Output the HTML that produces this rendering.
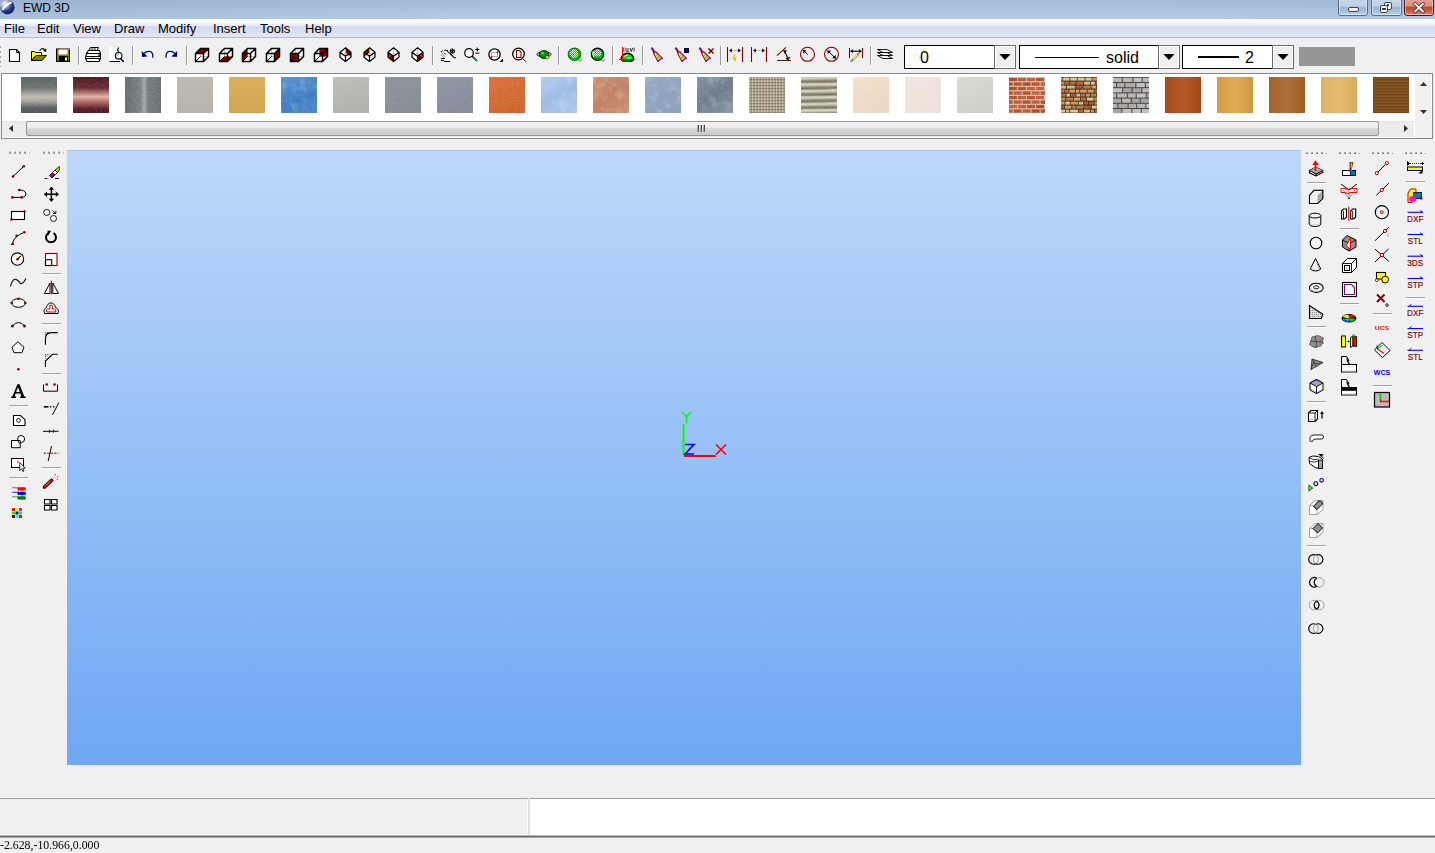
<!DOCTYPE html><html><head><meta charset="utf-8"><style>
*{margin:0;padding:0;box-sizing:border-box}
html,body{width:1435px;height:853px;overflow:hidden;background:#f0f0f0;font-family:"Liberation Sans",sans-serif}
.a{position:absolute}
svg{position:absolute;overflow:visible}
</style></head><body><div class="a" style="left:0;top:0;width:1435px;height:19px;background:linear-gradient(180deg,#a3bbd8 0%,#b6cde8 100%)"></div>
<div class="a" style="left:0;top:0;width:1435px;height:19px;background:linear-gradient(90deg,rgba(20,40,80,0.07) 0%,rgba(20,40,80,0) 35%,rgba(20,40,80,0) 80%,rgba(20,40,80,0.03) 100%)"></div>
<svg style="left:0;top:0" width="16" height="16" viewBox="0 0 16 16">
<defs><radialGradient id="gi" cx="0.3" cy="0.25" r="0.85"><stop offset="0" stop-color="#f4f4f8"/><stop offset="0.35" stop-color="#a8b0d0"/><stop offset="0.6" stop-color="#2a3a88"/><stop offset="1" stop-color="#0c1860"/></radialGradient></defs>
<circle cx="7.4" cy="7.2" r="7.2" fill="url(#gi)"/>
<path d="M1.5 9.5 Q5 4 11 1.5 L12.2 2.6 Q6.5 6 3 10.8Z" fill="#fff"/>
<path d="M3 10.5 Q7 6.5 12.5 3.5" stroke="#5a68a8" stroke-width="0.8" fill="none"/>
</svg>
<div class="a" style="left:23px;top:1px;font-size:12px;line-height:15px;color:#000">EWD 3D</div>
<div class="a" style="left:1338px;top:-2px;width:30px;height:18px;border:1px solid #5a6a82;border-radius:3px;background:linear-gradient(180deg,#c8d8ec 0%,#bccfe6 45%,#9fb6d2 50%,#a6bedb 75%,#c0d4ec 100%);box-shadow:inset 0 0 0 1px rgba(255,255,255,0.45)"></div>
<div class="a" style="left:1371px;top:-2px;width:31px;height:18px;border:1px solid #5a6a82;border-radius:3px;background:linear-gradient(180deg,#c8d8ec 0%,#bccfe6 45%,#9fb6d2 50%,#a6bedb 75%,#c0d4ec 100%);box-shadow:inset 0 0 0 1px rgba(255,255,255,0.45)"></div>
<div class="a" style="left:1404px;top:-2px;width:30px;height:18px;border:1px solid #4a1a20;border-radius:3px;background:linear-gradient(180deg,#e8a293 0%,#dc8a78 45%,#c0432a 50%,#c85a40 75%,#dc8e78 100%);box-shadow:inset 0 0 0 1px rgba(255,255,255,0.45)"></div>
<div class="a" style="left:1348px;top:7px;width:11px;height:5px;background:#f4f2ee;border:1px solid #3a4452;border-radius:2px"></div>
<div class="a" style="left:1384px;top:2px;width:8px;height:8px;background:#f4f2ee;border:1px solid #3a4452;border-radius:2px"></div>
<div class="a" style="left:1387px;top:4px;width:2px;height:2px;background:#3a4452"></div>
<div class="a" style="left:1380px;top:5px;width:8px;height:8px;background:#f4f2ee;border:1px solid #3a4452;border-radius:2px"></div>
<div class="a" style="left:1382px;top:8px;width:4px;height:2px;background:#3a4452"></div>
<svg style="left:1413px;top:2px" width="12" height="11" viewBox="0 0 12 11"><path d="M2 1.8 L10 9.5 M10 1.8 L2 9.5" stroke="#3a3030" stroke-width="3.6" stroke-linecap="round"/><path d="M2 1.8 L10 9.5 M10 1.8 L2 9.5" stroke="#f2f0ee" stroke-width="2" stroke-linecap="round"/></svg>
<div class="a" style="left:0;top:19px;width:1435px;height:19px;background:linear-gradient(180deg,#ffffff 0px,#fcfdfe 2px,#eef1f8 5px,#e6eaf5 6.5px,#d5dbee 7.2px,#d9dff1 12px,#e2e6f5 18px);border-bottom:1px solid #b4b9cc"></div>
<div class="a" style="left:4px;top:21px;font-size:13px;line-height:15px;color:#000">File</div>
<div class="a" style="left:37px;top:21px;font-size:13px;line-height:15px;color:#000">Edit</div>
<div class="a" style="left:73px;top:21px;font-size:13px;line-height:15px;color:#000">View</div>
<div class="a" style="left:114px;top:21px;font-size:13px;line-height:15px;color:#000">Draw</div>
<div class="a" style="left:158px;top:21px;font-size:13px;line-height:15px;color:#000">Modify</div>
<div class="a" style="left:213px;top:21px;font-size:13px;line-height:15px;color:#000">Insert</div>
<div class="a" style="left:260px;top:21px;font-size:13px;line-height:15px;color:#000">Tools</div>
<div class="a" style="left:305px;top:21px;font-size:13px;line-height:15px;color:#000">Help</div>
<div class="a" style="left:0px;top:46px;width:1px;height:2px;background:#a4a4a4"></div>
<div class="a" style="left:0px;top:51px;width:1px;height:2px;background:#a4a4a4"></div>
<div class="a" style="left:0px;top:56px;width:1px;height:2px;background:#a4a4a4"></div>
<div class="a" style="left:0px;top:61px;width:1px;height:2px;background:#a4a4a4"></div>
<div class="a" style="left:0px;top:66px;width:1px;height:1px;background:#a4a4a4"></div>
<div class="a" style="left:78px;top:46px;width:1px;height:19px;background:#9a9a9a"></div>
<div class="a" style="left:79px;top:46px;width:1px;height:19px;background:#fcfcfc"></div>
<div class="a" style="left:132px;top:46px;width:1px;height:19px;background:#9a9a9a"></div>
<div class="a" style="left:133px;top:46px;width:1px;height:19px;background:#fcfcfc"></div>
<div class="a" style="left:186px;top:46px;width:1px;height:19px;background:#9a9a9a"></div>
<div class="a" style="left:187px;top:46px;width:1px;height:19px;background:#fcfcfc"></div>
<div class="a" style="left:432px;top:46px;width:1px;height:19px;background:#9a9a9a"></div>
<div class="a" style="left:433px;top:46px;width:1px;height:19px;background:#fcfcfc"></div>
<div class="a" style="left:558px;top:46px;width:1px;height:19px;background:#9a9a9a"></div>
<div class="a" style="left:559px;top:46px;width:1px;height:19px;background:#fcfcfc"></div>
<div class="a" style="left:612px;top:46px;width:1px;height:19px;background:#9a9a9a"></div>
<div class="a" style="left:613px;top:46px;width:1px;height:19px;background:#fcfcfc"></div>
<div class="a" style="left:642px;top:46px;width:1px;height:19px;background:#9a9a9a"></div>
<div class="a" style="left:643px;top:46px;width:1px;height:19px;background:#fcfcfc"></div>
<div class="a" style="left:720px;top:46px;width:1px;height:19px;background:#9a9a9a"></div>
<div class="a" style="left:721px;top:46px;width:1px;height:19px;background:#fcfcfc"></div>
<div class="a" style="left:870px;top:46px;width:1px;height:19px;background:#9a9a9a"></div>
<div class="a" style="left:871px;top:46px;width:1px;height:19px;background:#fcfcfc"></div>
<div class="a" style="left:904px;top:45px;width:91px;height:24px;background:#fff;border:1px solid #000"></div>
<div class="a" style="left:994px;top:45px;width:22px;height:24px;background:#efefef;border:1px solid #6a6a6a;box-shadow:inset 1px 1px 0 #fff,inset -1px -1px 0 #fff"></div>
<svg style="left:999.0px;top:54px" width="12" height="7" viewBox="0 0 12 7"><path d="M0.3 0 L11.7 0 L6 6Z" fill="#000"/></svg>
<div class="a" style="left:1019px;top:45px;width:140px;height:24px;background:#fff;border:1px solid #000"></div>
<div class="a" style="left:1158px;top:45px;width:22px;height:24px;background:#efefef;border:1px solid #6a6a6a;box-shadow:inset 1px 1px 0 #fff,inset -1px -1px 0 #fff"></div>
<svg style="left:1163.0px;top:54px" width="12" height="7" viewBox="0 0 12 7"><path d="M0.3 0 L11.7 0 L6 6Z" fill="#000"/></svg>
<div class="a" style="left:1182px;top:45px;width:91px;height:24px;background:#fff;border:1px solid #000"></div>
<div class="a" style="left:1272px;top:45px;width:22px;height:24px;background:#efefef;border:1px solid #6a6a6a;box-shadow:inset 1px 1px 0 #fff,inset -1px -1px 0 #fff"></div>
<svg style="left:1277.0px;top:54px" width="12" height="7" viewBox="0 0 12 7"><path d="M0.3 0 L11.7 0 L6 6Z" fill="#000"/></svg>
<div class="a" style="left:920px;top:48px;font-size:16px;line-height:20px;color:#000">0</div>
<div class="a" style="left:1035px;top:57px;width:64px;height:1px;background:#000"></div>
<div class="a" style="left:1106px;top:48px;font-size:16px;line-height:20px;color:#000">solid</div>
<div class="a" style="left:1198px;top:56px;width:41px;height:2px;background:#000"></div>
<div class="a" style="left:1245px;top:48px;font-size:16px;line-height:20px;color:#000">2</div>
<div class="a" style="left:1299px;top:47px;width:56px;height:19px;background:#969696"></div>
<div class="a" style="left:1px;top:73px;width:1432px;height:66px;background:#fff;border:1px solid #828790"></div>
<div class="a" style="left:21px;top:77px;width:36px;height:36px;background:linear-gradient(180deg,#5c6466 0%,#6e7472 30%,#c4beb4 55%,#a8a49c 68%,#5a6062 85%,#4e5658 100%)"></div>
<div class="a" style="left:73px;top:77px;width:36px;height:36px;background:linear-gradient(180deg,#4a1c22 0%,#6a2a30 30%,#e4b4a4 55%,#b06460 70%,#5a2028 88%,#4a1a20 100%)"></div>
<div class="a" style="left:125px;top:77px;width:36px;height:36px;background:linear-gradient(90deg,#646c6e 0%,#7a8284 42%,#a2aaac 54%,#747c7e 64%,#687072 100%)"></div>
<div class="a" style="left:177px;top:77px;width:36px;height:36px;background:linear-gradient(180deg,#bfbab2,#b8b3ab)"></div>
<div class="a" style="left:229px;top:77px;width:36px;height:36px;background:linear-gradient(180deg,#dcae58,#d4a44c)"></div>
<div class="a" style="left:281px;top:77px;width:36px;height:36px;background:linear-gradient(160deg,#5a94d4,#3e7cc2 60%,#4c86cc)"></div>
<div class="a" style="left:333px;top:77px;width:36px;height:36px;background:linear-gradient(160deg,#c0c0bc,#aeb0ac)"></div>
<div class="a" style="left:385px;top:77px;width:36px;height:36px;background:linear-gradient(160deg,#8e949a,#868c94)"></div>
<div class="a" style="left:437px;top:77px;width:36px;height:36px;background:linear-gradient(160deg,#9094a4,#868a9a)"></div>
<div class="a" style="left:489px;top:77px;width:36px;height:36px;background:linear-gradient(160deg,#dc7038,#d06028)"></div>
<div class="a" style="left:541px;top:77px;width:36px;height:36px;background:linear-gradient(150deg,#b4cdf0,#9ebce6 50%,#b0caee)"></div>
<div class="a" style="left:593px;top:77px;width:36px;height:36px;background:linear-gradient(150deg,#cc9074,#c08064 50%,#cc9070)"></div>
<div class="a" style="left:645px;top:77px;width:36px;height:36px;background:linear-gradient(150deg,#94a8c4,#8aa0be)"></div>
<div class="a" style="left:697px;top:77px;width:36px;height:36px;background:linear-gradient(150deg,#8494a4,#6c7c8c 50%,#8898a6)"></div>
<div class="a" style="left:749px;top:77px;width:36px;height:36px;background:repeating-linear-gradient(90deg,rgba(255,255,240,0.25) 0px,rgba(255,255,240,0.25) 1px,rgba(0,0,0,0.15) 2px,rgba(0,0,0,0) 3px),repeating-linear-gradient(180deg,#a89c84 0px,#b8ae98 1.5px,#6e6450 3px)"></div>
<div class="a" style="left:801px;top:77px;width:36px;height:36px;background:repeating-linear-gradient(179deg,#c4c0b0 0px,#dcd8c8 1.5px,#9a9482 3.5px,#74705e 5px,#b0ac9c 6.5px)"></div>
<div class="a" style="left:853px;top:77px;width:36px;height:36px;background:linear-gradient(150deg,#f4e2d0,#ecd6c0)"></div>
<div class="a" style="left:905px;top:77px;width:36px;height:36px;background:linear-gradient(150deg,#f2e6e0,#eee0d8)"></div>
<div class="a" style="left:957px;top:77px;width:36px;height:36px;background:linear-gradient(150deg,#dcdcd2,#cfcec4)"></div>
<div class="a" style="left:1009px;top:77px;width:36px;height:36px;background:repeating-linear-gradient(180deg,#b65a3a 0px,#b65a3a 3.5px,#e8d8c0 4px,#e8d8c0 4.5px)"></div>
<div class="a" style="left:1061px;top:77px;width:36px;height:36px;background:repeating-linear-gradient(180deg,#b88450 0px,#d4b078 2px,#603820 3px,#c89868 4px)"></div>
<div class="a" style="left:1113px;top:77px;width:36px;height:36px;background:repeating-linear-gradient(180deg,#b8b8b8 0px,#b0acac 4px,#404040 5px,#b8b8b8 6px)"></div>
<div class="a" style="left:1165px;top:77px;width:36px;height:36px;background:linear-gradient(90deg,#a44a18,#b65a28 50%,#a24818)"></div>
<div class="a" style="left:1217px;top:77px;width:36px;height:36px;background:linear-gradient(90deg,#d49a44,#e0ac58 50%,#d09840)"></div>
<div class="a" style="left:1269px;top:77px;width:36px;height:36px;background:linear-gradient(90deg,#a46226,#b07038 50%,#a05e24)"></div>
<div class="a" style="left:1321px;top:77px;width:36px;height:36px;background:linear-gradient(90deg,#dcb060,#e4bc70 50%,#d8ac5c)"></div>
<div class="a" style="left:1373px;top:77px;width:36px;height:36px;background:repeating-linear-gradient(180deg,#7a4a1a 0px,#8a5a28 2px,#5a3410 3px)"></div>
<svg style="left:0;top:0" width="1435" height="140" viewBox="0 0 1435 140"><defs><filter id="nz" x="0" y="0" width="100%" height="100%"><feTurbulence type="fractalNoise" baseFrequency="0.9" numOctaves="2" seed="3"/><feColorMatrix type="matrix" values="0 0 0 0 0.5  0 0 0 0 0.5  0 0 0 0 0.5  0 0 0 2.2 -1.1"/></filter><filter id="nz2" x="0" y="0" width="100%" height="100%"><feTurbulence type="fractalNoise" baseFrequency="0.12" numOctaves="3" seed="9"/><feColorMatrix type="matrix" values="0 0 0 0 1  0 0 0 0 1  0 0 0 0 1  0 0 0 1.6 -0.75"/></filter></defs><rect x="21" y="77" width="36" height="36" filter="url(#nz)" opacity="0.35"/><rect x="73" y="77" width="36" height="36" filter="url(#nz)" opacity="0.35"/><rect x="125" y="77" width="36" height="36" filter="url(#nz)" opacity="0.6"/><rect x="177" y="77" width="36" height="36" filter="url(#nz)" opacity="0.3"/><rect x="229" y="77" width="36" height="36" filter="url(#nz)" opacity="0.3"/><rect x="281" y="77" width="36" height="36" filter="url(#nz)" opacity="0.3"/><rect x="333" y="77" width="36" height="36" filter="url(#nz)" opacity="0.6"/><rect x="385" y="77" width="36" height="36" filter="url(#nz)" opacity="0.45"/><rect x="437" y="77" width="36" height="36" filter="url(#nz)" opacity="0.45"/><rect x="489" y="77" width="36" height="36" filter="url(#nz)" opacity="0.55"/><rect x="541" y="77" width="36" height="36" filter="url(#nz)" opacity="0.3"/><rect x="593" y="77" width="36" height="36" filter="url(#nz)" opacity="0.3"/><rect x="645" y="77" width="36" height="36" filter="url(#nz)" opacity="0.3"/><rect x="697" y="77" width="36" height="36" filter="url(#nz)" opacity="0.3"/><rect x="853" y="77" width="36" height="36" filter="url(#nz)" opacity="0.3"/><rect x="957" y="77" width="36" height="36" filter="url(#nz)" opacity="0.3"/><rect x="281" y="77" width="36" height="36" filter="url(#nz2)" opacity="0.35"/><rect x="541" y="77" width="36" height="36" filter="url(#nz2)" opacity="0.35"/><rect x="593" y="77" width="36" height="36" filter="url(#nz2)" opacity="0.35"/><rect x="645" y="77" width="36" height="36" filter="url(#nz2)" opacity="0.35"/><rect x="697" y="77" width="36" height="36" filter="url(#nz2)" opacity="0.35"/><rect x="1009" y="77" width="36" height="36" fill="#e4d6c0"/><rect x="1009.0" y="77.8" width="8.2" height="3.5" fill="#a84a2c"/><rect x="1018.0" y="77.8" width="8.2" height="3.5" fill="#be5c38"/><rect x="1027.0" y="77.8" width="8.2" height="3.5" fill="#c06040"/><rect x="1036.0" y="77.8" width="8.2" height="3.5" fill="#b4522f"/><rect x="1009.0" y="82.3" width="3.7" height="3.5" fill="#b4522f"/><rect x="1013.5" y="82.3" width="8.2" height="3.5" fill="#b4522f"/><rect x="1022.5" y="82.3" width="8.2" height="3.5" fill="#a84a2c"/><rect x="1031.5" y="82.3" width="8.2" height="3.5" fill="#b4522f"/><rect x="1040.5" y="82.3" width="4.5" height="3.5" fill="#be5c38"/><rect x="1009.0" y="86.8" width="8.2" height="3.5" fill="#b4522f"/><rect x="1018.0" y="86.8" width="8.2" height="3.5" fill="#b4522f"/><rect x="1027.0" y="86.8" width="8.2" height="3.5" fill="#c06040"/><rect x="1036.0" y="86.8" width="8.2" height="3.5" fill="#c06040"/><rect x="1009.0" y="91.3" width="3.7" height="3.5" fill="#b4522f"/><rect x="1013.5" y="91.3" width="8.2" height="3.5" fill="#be5c38"/><rect x="1022.5" y="91.3" width="8.2" height="3.5" fill="#b4522f"/><rect x="1031.5" y="91.3" width="8.2" height="3.5" fill="#c06040"/><rect x="1040.5" y="91.3" width="4.5" height="3.5" fill="#b4522f"/><rect x="1009.0" y="95.8" width="8.2" height="3.5" fill="#b4522f"/><rect x="1018.0" y="95.8" width="8.2" height="3.5" fill="#be5c38"/><rect x="1027.0" y="95.8" width="8.2" height="3.5" fill="#b4522f"/><rect x="1036.0" y="95.8" width="8.2" height="3.5" fill="#c06040"/><rect x="1009.0" y="100.3" width="3.7" height="3.5" fill="#b4522f"/><rect x="1013.5" y="100.3" width="8.2" height="3.5" fill="#be5c38"/><rect x="1022.5" y="100.3" width="8.2" height="3.5" fill="#b4522f"/><rect x="1031.5" y="100.3" width="8.2" height="3.5" fill="#be5c38"/><rect x="1040.5" y="100.3" width="4.5" height="3.5" fill="#a84a2c"/><rect x="1009.0" y="104.8" width="8.2" height="3.5" fill="#c06040"/><rect x="1018.0" y="104.8" width="8.2" height="3.5" fill="#be5c38"/><rect x="1027.0" y="104.8" width="8.2" height="3.5" fill="#b4522f"/><rect x="1036.0" y="104.8" width="8.2" height="3.5" fill="#a84a2c"/><rect x="1009.0" y="109.3" width="3.7" height="3.5" fill="#be5c38"/><rect x="1013.5" y="109.3" width="8.2" height="3.5" fill="#b4522f"/><rect x="1022.5" y="109.3" width="8.2" height="3.5" fill="#be5c38"/><rect x="1031.5" y="109.3" width="8.2" height="3.5" fill="#a84a2c"/><rect x="1040.5" y="109.3" width="4.5" height="3.5" fill="#b4522f"/><rect x="1061" y="77" width="36" height="36" fill="#3a2818"/><rect x="1061.0" y="77.6" width="1.3" height="3" fill="#d8b880"/><rect x="1063.1" y="77.6" width="6.3" height="3" fill="#e0c898"/><rect x="1070.2" y="77.6" width="6.6" height="3" fill="#e0c898"/><rect x="1077.6" y="77.6" width="7.1" height="3" fill="#e0c898"/><rect x="1085.5" y="77.6" width="6.1" height="3" fill="#e0c898"/><rect x="1092.4" y="77.6" width="4.6" height="3" fill="#c89058"/><rect x="1061.0" y="81.6" width="3.5" height="3" fill="#c89058"/><rect x="1065.3" y="81.6" width="3.6" height="3" fill="#b86838"/><rect x="1069.7" y="81.6" width="5.8" height="3" fill="#b86838"/><rect x="1076.4" y="81.6" width="6.8" height="3" fill="#b86838"/><rect x="1084.0" y="81.6" width="6.2" height="3" fill="#d8b880"/><rect x="1091.0" y="81.6" width="3.8" height="3" fill="#e0c898"/><rect x="1095.6" y="81.6" width="1.4" height="3" fill="#b86838"/><rect x="1061.0" y="85.6" width="5.0" height="3" fill="#d8b880"/><rect x="1066.8" y="85.6" width="8.0" height="3" fill="#d8b880"/><rect x="1075.6" y="85.6" width="7.0" height="3" fill="#a05830"/><rect x="1083.5" y="85.6" width="7.1" height="3" fill="#c07848"/><rect x="1091.4" y="85.6" width="4.8" height="3" fill="#d0a060"/><rect x="1097.0" y="85.6" width="0.0" height="3" fill="#e0c898"/><rect x="1061.0" y="89.6" width="3.2" height="3" fill="#c07848"/><rect x="1065.0" y="89.6" width="3.7" height="3" fill="#b86838"/><rect x="1069.4" y="89.6" width="5.6" height="3" fill="#d0a060"/><rect x="1075.8" y="89.6" width="3.5" height="3" fill="#d0a060"/><rect x="1080.1" y="89.6" width="6.7" height="3" fill="#d0a060"/><rect x="1087.6" y="89.6" width="6.1" height="3" fill="#d0a060"/><rect x="1094.5" y="89.6" width="2.5" height="3" fill="#b86838"/><rect x="1061.0" y="93.6" width="4.8" height="3" fill="#b86838"/><rect x="1066.6" y="93.6" width="3.3" height="3" fill="#e0c898"/><rect x="1070.7" y="93.6" width="5.0" height="3" fill="#a05830"/><rect x="1076.5" y="93.6" width="3.8" height="3" fill="#d8b880"/><rect x="1081.0" y="93.6" width="4.3" height="3" fill="#b86838"/><rect x="1086.1" y="93.6" width="3.8" height="3" fill="#c89058"/><rect x="1090.8" y="93.6" width="5.2" height="3" fill="#c07848"/><rect x="1096.8" y="93.6" width="0.2" height="3" fill="#c89058"/><rect x="1061.0" y="97.6" width="4.2" height="3" fill="#c89058"/><rect x="1066.0" y="97.6" width="7.3" height="3" fill="#c07848"/><rect x="1074.0" y="97.6" width="6.0" height="3" fill="#d0a060"/><rect x="1080.8" y="97.6" width="5.3" height="3" fill="#b86838"/><rect x="1086.9" y="97.6" width="6.6" height="3" fill="#e0c898"/><rect x="1094.3" y="97.6" width="2.7" height="3" fill="#c89058"/><rect x="1061.0" y="101.6" width="3.6" height="3" fill="#d0a060"/><rect x="1065.4" y="101.6" width="4.4" height="3" fill="#e0c898"/><rect x="1070.6" y="101.6" width="7.4" height="3" fill="#c89058"/><rect x="1078.7" y="101.6" width="4.5" height="3" fill="#d8b880"/><rect x="1084.1" y="101.6" width="3.9" height="3" fill="#a05830"/><rect x="1088.8" y="101.6" width="5.0" height="3" fill="#a05830"/><rect x="1094.6" y="101.6" width="2.4" height="3" fill="#c89058"/><rect x="1061.0" y="105.6" width="3.0" height="3" fill="#a05830"/><rect x="1064.8" y="105.6" width="6.5" height="3" fill="#d0a060"/><rect x="1072.1" y="105.6" width="3.5" height="3" fill="#c07848"/><rect x="1076.4" y="105.6" width="7.1" height="3" fill="#c07848"/><rect x="1084.3" y="105.6" width="6.6" height="3" fill="#a05830"/><rect x="1091.7" y="105.6" width="5.2" height="3" fill="#e0c898"/><rect x="1061.0" y="109.6" width="4.0" height="3" fill="#e0c898"/><rect x="1065.8" y="109.6" width="3.5" height="3" fill="#d8b880"/><rect x="1070.1" y="109.6" width="8.1" height="3" fill="#e0c898"/><rect x="1079.1" y="109.6" width="4.0" height="3" fill="#b86838"/><rect x="1083.9" y="109.6" width="6.2" height="3" fill="#d8b880"/><rect x="1090.9" y="109.6" width="3.2" height="3" fill="#c89058"/><rect x="1094.9" y="109.6" width="2.1" height="3" fill="#b86838"/><rect x="1113" y="77" width="36" height="36" fill="#404040"/><rect x="1113.0" y="77.8" width="8.8" height="4.2" fill="#b8b8b8"/><rect x="1122.8" y="77.8" width="9.6" height="4.2" fill="#bcb8b4"/><rect x="1133.5" y="77.8" width="8.1" height="4.2" fill="#c4c0c0"/><rect x="1142.6" y="77.8" width="6.4" height="4.2" fill="#bcb8b4"/><rect x="1113.0" y="83.0" width="3.1" height="4.2" fill="#b8b8b8"/><rect x="1117.1" y="83.0" width="7.3" height="4.2" fill="#b0aca8"/><rect x="1125.4" y="83.0" width="10.0" height="4.2" fill="#b0aca8"/><rect x="1136.4" y="83.0" width="8.4" height="4.2" fill="#c4c0c0"/><rect x="1145.9" y="83.0" width="3.1" height="4.2" fill="#b8b8b8"/><rect x="1113.0" y="88.2" width="9.2" height="4.2" fill="#c4c0c0"/><rect x="1123.2" y="88.2" width="8.4" height="4.2" fill="#a8a4a4"/><rect x="1132.7" y="88.2" width="8.5" height="4.2" fill="#a8a4a4"/><rect x="1142.2" y="88.2" width="6.8" height="4.2" fill="#bcb8b4"/><rect x="1113.0" y="93.4" width="3.1" height="4.2" fill="#bcb8b4"/><rect x="1117.1" y="93.4" width="9.7" height="4.2" fill="#bcb8b4"/><rect x="1127.8" y="93.4" width="7.9" height="4.2" fill="#b8b8b8"/><rect x="1136.7" y="93.4" width="9.1" height="4.2" fill="#c4c0c0"/><rect x="1146.8" y="93.4" width="2.2" height="4.2" fill="#a8a4a4"/><rect x="1113.0" y="98.6" width="8.1" height="4.2" fill="#a8a4a4"/><rect x="1122.1" y="98.6" width="8.6" height="4.2" fill="#bcb8b4"/><rect x="1131.7" y="98.6" width="8.0" height="4.2" fill="#a8a4a4"/><rect x="1140.7" y="98.6" width="8.3" height="4.2" fill="#a8a4a4"/><rect x="1113.0" y="103.8" width="4.4" height="4.2" fill="#b0aca8"/><rect x="1118.4" y="103.8" width="9.2" height="4.2" fill="#a8a4a4"/><rect x="1128.6" y="103.8" width="7.6" height="4.2" fill="#b0aca8"/><rect x="1137.2" y="103.8" width="8.1" height="4.2" fill="#b8b8b8"/><rect x="1146.3" y="103.8" width="2.7" height="4.2" fill="#c4c0c0"/><rect x="1113.0" y="109.0" width="8.4" height="4.2" fill="#a8a4a4"/><rect x="1122.4" y="109.0" width="9.1" height="4.2" fill="#c4c0c0"/><rect x="1132.5" y="109.0" width="8.3" height="4.2" fill="#c4c0c0"/><rect x="1141.8" y="109.0" width="7.2" height="4.2" fill="#c4c0c0"/><rect x="1009" y="77" width="36" height="36" filter="url(#nz)" opacity="0.4"/><rect x="1061" y="77" width="36" height="36" filter="url(#nz)" opacity="0.4"/><rect x="1113" y="77" width="36" height="36" filter="url(#nz)" opacity="0.4"/><rect x="749" y="77" width="36" height="36" filter="url(#nz)" opacity="0.4"/><rect x="801" y="77" width="36" height="36" filter="url(#nz)" opacity="0.4"/></svg>
<div class="a" style="left:1415px;top:74px;width:16px;height:47px;background:#f0f0f0"></div>
<svg style="left:1420px;top:82px" width="7" height="4" viewBox="0 0 7 4"><path d="M0 4 L3.5 0 L7 4Z" fill="#303030"/></svg>
<svg style="left:1420px;top:110px" width="7" height="4" viewBox="0 0 7 4"><path d="M0 0 L3.5 4 L7 0Z" fill="#303030"/></svg>
<div class="a" style="left:2px;top:121px;width:1412px;height:16px;background:#ececec;border-top:1px solid #e4e4e4"></div>
<div class="a" style="left:1415px;top:121px;width:17px;height:17px;background:#f0f0f0"></div>
<svg style="left:9px;top:125px" width="4" height="7" viewBox="0 0 4 7"><path d="M4 0 L0 3.5 L4 7Z" fill="#303030"/></svg>
<svg style="left:1404px;top:125px" width="4" height="7" viewBox="0 0 4 7"><path d="M0 0 L4 3.5 L0 7Z" fill="#303030"/></svg>
<div class="a" style="left:26px;top:121px;width:1353px;height:15px;border:1px solid #979797;border-radius:2px;background:linear-gradient(180deg,#f3f3f3 0%,#ebebeb 45%,#d9d9d9 50%,#c8c8c8 100%)"></div>
<div class="a" style="left:698px;top:125px;width:1px;height:7px;background:linear-gradient(180deg,#303030,#707070)"></div>
<div class="a" style="left:697px;top:125px;width:1px;height:7px;background:rgba(80,80,80,0.35)"></div>
<div class="a" style="left:701px;top:125px;width:1px;height:7px;background:linear-gradient(180deg,#303030,#707070)"></div>
<div class="a" style="left:700px;top:125px;width:1px;height:7px;background:rgba(80,80,80,0.35)"></div>
<div class="a" style="left:704px;top:125px;width:1px;height:7px;background:linear-gradient(180deg,#303030,#707070)"></div>
<div class="a" style="left:703px;top:125px;width:1px;height:7px;background:rgba(80,80,80,0.35)"></div>
<div class="a" style="left:67px;top:150px;width:1234px;height:615px;background:linear-gradient(180deg,#bdd8f9 0%,#6fa7f4 100%);border-top:1px solid #a6c8f6"></div>
<svg style="left:680px;top:410px" width="50" height="50" viewBox="0 0 50 50">
<path d="M3.5 14 L3.5 45" stroke="#00ff00" stroke-width="2"/>
<path d="M2 2 L6.5 6.5 L11 2 M6.5 6.5 L6.5 13" stroke="#00ff00" stroke-width="1.6" fill="none"/>
<path d="M4 46 L36 46" stroke="#ff0000" stroke-width="2"/>
<path d="M36 34.5 L46 44.5 M46 34.5 L36 44.5" stroke="#ff0000" stroke-width="1.6"/>
<path d="M5 34.5 L14 34.5 L5 44 L14 44" stroke="#0000ff" stroke-width="1.6" fill="none"/>
</svg>
<div class="a" style="left:0px;top:798px;width:1435px;height:1px;background:#a0a0a0"></div>
<div class="a" style="left:0px;top:799px;width:527px;height:35px;background:#f0f0f0"></div>
<div class="a" style="left:0px;top:834px;width:528px;height:1px;background:#fff"></div>
<div class="a" style="left:527px;top:799px;width:1px;height:36px;background:#fff"></div>
<div class="a" style="left:528px;top:798px;width:2px;height:38px;background:#dde2ea"></div>
<div class="a" style="left:530px;top:799px;width:905px;height:37px;background:#fff"></div>
<div class="a" style="left:0px;top:835px;width:1435px;height:1px;background:#b8b8b8"></div>
<div class="a" style="left:0px;top:836px;width:1435px;height:1px;background:#6a6a6a"></div>
<div class="a" style="left:0px;top:837px;width:1435px;height:1px;background:#a8a8a8"></div>
<div class="a" style="left:0px;top:837px;font-family:&quot;Liberation Serif&quot;,serif;font-size:13.5px;line-height:15px;color:#000;transform:scaleX(0.875);transform-origin:0 0">-2.628,-10.966,0.000</div>
<svg style="left:0;top:0" width="1435" height="853" viewBox="0 0 1435 853"><path d="M9.5 49.5 H16.5 L19.5 52.5 V61.5 H9.5Z" fill="#fff" stroke="#000" stroke-width="1.1"/>
<path d="M16.5 49.5 V52.5 H19.5" fill="none" stroke="#000" stroke-width="0.9"/>
<path d="M31.5 51.5 H34.5 L35.5 52.5 H41.5 V55.5 H36 L31.5 60.5Z" fill="#ffff00" stroke="#000" stroke-width="1"/>
<path d="M31.5 60.5 L36 55.5 H46.5 L42 60.5Z" fill="#808000" stroke="#000" stroke-width="1"/>
<path d="M39.6 50.6 Q41.8 47.3 44.6 49.6" fill="none" stroke="#000" stroke-width="1.1"/>
<path d="M43.2 50.6 L46.3 48.6 L46 52.3Z" fill="#000"/>
<rect x="56" y="48.5" width="14" height="13.5" fill="#000"/>
<rect x="57" y="49.5" width="12" height="11.5" fill="#808000"/>
<rect x="58.5" y="49.5" width="9" height="5" fill="#fff"/>
<rect x="59" y="56" width="9" height="6" fill="#000"/>
<rect x="65" y="57.5" width="2" height="3" fill="#fff"/>
<rect x="68.3" y="49" width="1" height="1" fill="#fff"/>
<path d="M88.5 50.5 L90.5 47.5 H98.5 L97 50.5" fill="#fff" stroke="#000" stroke-width="1"/>
<path d="M90.5 49 H96" stroke="#000" stroke-width="0.8"/>
<path d="M86.5 53.5 L88.5 50.5 H99.5 L100.5 53.5 V58.5 L99 61.5 H87 L85.5 58.5Z" fill="#fff" stroke="#000" stroke-width="1.1"/>
<path d="M86 53.5 H100.5 M85.5 56.5 H100.5 M86 58.5 H100" stroke="#000" stroke-width="1.1"/>
<rect x="91.5" y="57" width="3" height="1.2" fill="#e0d000"/>
<path d="M99.5 54 L98.5 55 L99.5 56.5 M99.5 59 L98.5 60" stroke="#000" stroke-width="0.8"/>
<rect x="109" y="47" width="9" height="14.5" fill="#fff"/>
<path d="M109.5 61.5 H120" stroke="#000" stroke-width="1"/>
<path d="M118.7 47.5 L117.5 50 L118.7 52" stroke="#000" stroke-width="1.1" fill="none"/>
<circle cx="118.7" cy="55.8" r="3.3" fill="#fff" stroke="#000" stroke-width="1.1"/>
<path d="M117 56.5 Q117 54.5 119 54" stroke="#00e0ff" stroke-width="1.2" fill="none"/>
<path d="M120.5 58.5 L123.5 61.5" stroke="#000" stroke-width="1.4"/>
<path d="M122 60.5 L123.8 61.8" stroke="#000080" stroke-width="1.3"/>
<path d="M144 53.5 Q146 51 149.5 51.3 Q153.5 52 152.8 57.8" fill="none" stroke="#000080" stroke-width="1.25"/>
<path d="M141.7 51 L142 57 L147.5 56.5Z" fill="#000080"/>
<path d="M174.9 53.5 Q172.9 51 169.4 51.3 Q165.4 52 166.1 57.8" fill="none" stroke="#000080" stroke-width="1.25"/>
<path d="M177.2 51 L176.9 57 L171.4 56.5Z" fill="#000080"/>
<path d="M195.5 53.5 L200.5 48.5 H208.5 V56.5 L203.5 61.5 H195.5Z" fill="#fff"/>
<path d="M200.5 48.5 V56.5 H208.5" fill="none" stroke="#b8b8b8" stroke-width="0.9"/>
<path d="M195.5 53.5 L200.5 48.5 H208.5 L203.5 53.5Z" fill="#800000"/>
<path d="M195.5 61.5 L200.5 56.5" stroke="#000" stroke-width="1"/>
<path d="M195.5 53.5 L200.5 48.5 H208.5 V56.5 L203.5 61.5 H195.5Z M195.5 53.5 H203.5 V61.5 M203.5 53.5 L208.5 48.5" fill="none" stroke="#000" stroke-width="1.5" stroke-linejoin="miter"/>
<path d="M219.5 53.5 L224.5 48.5 H232.5 V56.5 L227.5 61.5 H219.5Z" fill="#fff"/>
<path d="M224.5 48.5 V56.5 H232.5" fill="none" stroke="#b8b8b8" stroke-width="0.9"/>
<path d="M219.5 61.5 L224.5 56.5 H232.5 L227.5 61.5Z" fill="#800000"/>
<path d="M219.5 61.5 L224.5 56.5" stroke="#000" stroke-width="1"/>
<path d="M219.5 53.5 L224.5 48.5 H232.5 V56.5 L227.5 61.5 H219.5Z M219.5 53.5 H227.5 V61.5 M227.5 53.5 L232.5 48.5" fill="none" stroke="#000" stroke-width="1.5" stroke-linejoin="miter"/>
<path d="M242.5 53.5 L247.5 48.5 H255.5 V56.5 L250.5 61.5 H242.5Z" fill="#fff"/>
<path d="M247.5 48.5 V56.5 H255.5" fill="none" stroke="#b8b8b8" stroke-width="0.9"/>
<path d="M242.5 53.5 L247.5 48.5 V56.5 L242.5 61.5Z" fill="#800000"/>
<path d="M242.5 61.5 L247.5 56.5" stroke="#000" stroke-width="1"/>
<path d="M242.5 53.5 L247.5 48.5 H255.5 V56.5 L250.5 61.5 H242.5Z M242.5 53.5 H250.5 V61.5 M250.5 53.5 L255.5 48.5" fill="none" stroke="#000" stroke-width="1.5" stroke-linejoin="miter"/>
<path d="M266.5 53.5 L271.5 48.5 H279.5 V56.5 L274.5 61.5 H266.5Z" fill="#fff"/>
<path d="M271.5 48.5 V56.5 H279.5" fill="none" stroke="#b8b8b8" stroke-width="0.9"/>
<path d="M274.5 53.5 L279.5 48.5 V56.5 L274.5 61.5Z" fill="#800000"/>
<path d="M266.5 61.5 L271.5 56.5" stroke="#000" stroke-width="1"/>
<path d="M266.5 53.5 L271.5 48.5 H279.5 V56.5 L274.5 61.5 H266.5Z M266.5 53.5 H274.5 V61.5 M274.5 53.5 L279.5 48.5" fill="none" stroke="#000" stroke-width="1.5" stroke-linejoin="miter"/>
<path d="M290.5 53.5 L295.5 48.5 H303.5 V56.5 L298.5 61.5 H290.5Z" fill="#fff"/>
<path d="M295.5 48.5 V56.5 H303.5" fill="none" stroke="#b8b8b8" stroke-width="0.9"/>
<path d="M290.5 53.5 H298.5 V61.5 H290.5Z" fill="#800000"/>
<path d="M290.5 61.5 L295.5 56.5" stroke="#000" stroke-width="1"/>
<path d="M290.5 53.5 L295.5 48.5 H303.5 V56.5 L298.5 61.5 H290.5Z M290.5 53.5 H298.5 V61.5 M298.5 53.5 L303.5 48.5" fill="none" stroke="#000" stroke-width="1.5" stroke-linejoin="miter"/>
<path d="M314.5 53.5 L319.5 48.5 H327.5 V56.5 L322.5 61.5 H314.5Z" fill="#fff"/>
<path d="M319.5 48.5 V56.5 H327.5" fill="none" stroke="#b8b8b8" stroke-width="0.9"/>
<path d="M319.5 48.5 H327.5 V56.5 H319.5Z" fill="#800000"/>
<path d="M314.5 61.5 L319.5 56.5" stroke="#000" stroke-width="1"/>
<path d="M314.5 53.5 L319.5 48.5 H327.5 V56.5 L322.5 61.5 H314.5Z M314.5 53.5 H322.5 V61.5 M322.5 53.5 L327.5 48.5" fill="none" stroke="#000" stroke-width="1.5" stroke-linejoin="miter"/>
<path d="M345.5 47.8 L351.0 52.3 L351.0 57.2 L345.5 61.5 L340.0 57.2 L340.0 52.3Z" fill="#fff"/>
<path d="M345.5 47.8 L351.0 52.3 L351.0 57.2 L345.5 52.8Z" fill="#800000"/>
<path d="M345.5 47.8 V56.2 M340.0 57.2 L345.5 52.8 L351.0 57.2" stroke="#b0b0b0" stroke-width="0.8" fill="none"/>
<path d="M345.5 47.8 L351.0 52.3 L351.0 57.2 L345.5 61.5 L340.0 57.2 L340.0 52.3Z M340.0 52.3 L345.5 56.2 L351.0 52.3 M345.5 56.2 V61.5" fill="none" stroke="#000" stroke-width="1.2"/>
<path d="M369.5 47.8 L375.0 52.3 L375.0 57.2 L369.5 61.5 L364.0 57.2 L364.0 52.3Z" fill="#fff"/>
<path d="M369.5 47.8 L364.0 52.3 L364.0 57.2 L369.5 52.8Z" fill="#800000"/>
<path d="M369.5 47.8 V56.2 M364.0 57.2 L369.5 52.8 L375.0 57.2" stroke="#b0b0b0" stroke-width="0.8" fill="none"/>
<path d="M369.5 47.8 L375.0 52.3 L375.0 57.2 L369.5 61.5 L364.0 57.2 L364.0 52.3Z M364.0 52.3 L369.5 56.2 L375.0 52.3 M369.5 56.2 V61.5" fill="none" stroke="#000" stroke-width="1.2"/>
<path d="M393.5 47.8 L399.0 52.3 L399.0 57.2 L393.5 61.5 L388.0 57.2 L388.0 52.3Z" fill="#fff"/>
<path d="M388.0 52.3 L393.5 56.2 L393.5 61.5 L388.0 57.2Z" fill="#800000"/>
<path d="M393.5 47.8 V56.2 M388.0 57.2 L393.5 52.8 L399.0 57.2" stroke="#b0b0b0" stroke-width="0.8" fill="none"/>
<path d="M393.5 47.8 L399.0 52.3 L399.0 57.2 L393.5 61.5 L388.0 57.2 L388.0 52.3Z M388.0 52.3 L393.5 56.2 L399.0 52.3 M393.5 56.2 V61.5" fill="none" stroke="#000" stroke-width="1.2"/>
<path d="M417.5 47.8 L423.0 52.3 L423.0 57.2 L417.5 61.5 L412.0 57.2 L412.0 52.3Z" fill="#fff"/>
<path d="M423.0 52.3 L417.5 56.2 L417.5 61.5 L423.0 57.2Z" fill="#800000"/>
<path d="M417.5 47.8 V56.2 M412.0 57.2 L417.5 52.8 L423.0 57.2" stroke="#b0b0b0" stroke-width="0.8" fill="none"/>
<path d="M417.5 47.8 L423.0 52.3 L423.0 57.2 L417.5 61.5 L412.0 57.2 L412.0 52.3Z M412.0 52.3 L417.5 56.2 L423.0 52.3 M417.5 56.2 V61.5" fill="none" stroke="#000" stroke-width="1.2"/>
<path d="M441.5 50.5 L444.5 50 L448.5 50.3 L456 58 V61.5 H444 L441 59.5 V52Z" fill="#fff"/>
<path d="M442.4 50.5 L441.5 51.5 V52.5" stroke="#000" stroke-width="1" fill="none"/>
<path d="M444.3 50.4 H447.7" stroke="#000" stroke-width="1"/>
<path d="M442.5 51 L445.8 54.2 M442 53.5 L445 56.5 M441.5 55.3 L444.5 58.2 M445 53.5 L446.5 55" stroke="#000" stroke-width="1" stroke-dasharray="1 0.6" fill="none"/>
<path d="M447 50.8 L449 52.5 L451 54.5 L454.2 57.8 H456" stroke="#000" stroke-width="1.1" fill="none"/>
<path d="M441 58.5 H445 M441 60.5 H444 M444 61.5 H450" stroke="#000" stroke-width="1.1"/>
<circle cx="452.3" cy="51" r="2.6" fill="#000"/>
<path d="M451.3 49.8 h0.8 M453.2 49.8 h0.8 M451.3 51.8 h0.8 M453.2 51.8 h0.8" stroke="#fff" stroke-width="0.9"/>
<path d="M448.5 51.5 h0.9 M449.5 52.5 h0.9" stroke="#fff" stroke-width="0.8"/>
<circle cx="469" cy="53" r="4.3" fill="#fff" stroke="#000" stroke-width="1.2"/>
<path d="M472.2 56.2 L477 61" stroke="#000" stroke-width="1.6"/>
<path d="M473.5 57.5 L477 61" stroke="#1a8a8a" stroke-width="1.1"/>
<path d="M477.3 47.5 V51.5 M475.3 49.5 H479.3 M475.3 53.2 H479.3" stroke="#000" stroke-width="1"/>
<circle cx="494.5" cy="54.5" r="5.6" fill="#fff" stroke="#000" stroke-width="1.3"/>
<rect x="491.5" y="52.5" width="6" height="4" fill="none" stroke="#a8a8a8" stroke-width="1"/>
<path d="M497.5 51 L498.5 52.5 L497.5 54 L496.5 52.5Z M491.5 55.5 L492.5 57 L491.5 58.5 L490.5 57Z" fill="#e00000"/>
<path d="M499.5 62 H503 V58.5Z" fill="#000"/>
<circle cx="518.5" cy="54" r="5.8" fill="#fff" stroke="#000" stroke-width="1.3"/>
<path d="M516.5 50.5 H519.5 L521 52 V57.5 H516.5Z" fill="#fff" stroke="#800000" stroke-width="1.1"/>
<path d="M522.5 58.5 L526.5 62" stroke="#303030" stroke-width="1"/>
<ellipse cx="544" cy="54.3" rx="7.2" ry="2.4" fill="none" stroke="#000" stroke-width="0.9"/>
<ellipse cx="543.9" cy="54.5" rx="4.8" ry="4" fill="#009000" stroke="#000" stroke-width="0.8"/>
<circle cx="542.5" cy="53" r="1.5" fill="#40e040"/>
<circle cx="547.3" cy="57.2" r="1.7" fill="#ffff00" stroke="#000" stroke-width="0.6"/>
<defs><pattern id="dith" width="2" height="2" patternUnits="userSpaceOnUse"><rect width="2" height="2" fill="#00e000"/><rect width="1" height="1" fill="#fff"/><rect x="1" y="1" width="1" height="1" fill="#fff"/></pattern></defs>
<path d="M577 59 L580 61 L582 59" stroke="#a0a0a0" stroke-width="1.5" fill="none"/>
<circle cx="574.5" cy="54.3" r="6.2" fill="#00c000" stroke="#008000" stroke-width="1.2"/>
<circle cx="573.8" cy="53.5" r="4.3" fill="url(#dith)"/>
<path d="M600 59 L603 61 L605 59" stroke="#a0a0a0" stroke-width="1.5" fill="none"/>
<circle cx="597.5" cy="54.3" r="6.1" fill="#00c000" stroke="#000" stroke-width="1.3"/>
<circle cx="597.5" cy="53" r="3.6" fill="url(#dith)"/>
<path d="M593.3 51 Q592 54 594 57" stroke="#fff" stroke-width="1.3" fill="none"/>
<path d="M594 58.5 H600" stroke="#009000" stroke-width="1.2"/>
<path d="M620.5 57.5 Q622 53.8 625 53 Q628 51.8 631 53.5 Q634 55 634.2 58.5 Q634.5 61.5 631 61.8 H624 Q620 61.5 620.5 57.5Z" fill="#000"/>
<path d="M621.8 57.5 Q623 55 625.5 54.3 Q628 53.3 630.5 54.8 Q633 56 633 58.5 Q633 60.5 630.5 60.6 H624 Q621.6 60.5 621.8 57.5Z" fill="#00e000"/>
<path d="M624 56.5 Q626 55 628 55.5 M627 58 H631" stroke="#fff" stroke-width="0.9" fill="none"/>
<path d="M622.5 47 V62 M619 59.5 H635" stroke="#ff0000" stroke-width="1"/>
<path d="M624 47.5 Q623.2 49.5 624 51.5 M626 48 V50.5 Q626 51.5 627 51.5 Q628 51.5 628 50.5 V48 M629 51.2 L628.6 52.2 M630 48 L631.3 51.5 L632.6 48 M633.8 47.5 Q634.6 49.5 633.8 51.5" stroke="#000" stroke-width="0.8" fill="none"/>
<path d="M652.0 48.5 L654.0 51.5" stroke="#800080" stroke-width="2.2" stroke-linecap="round"/>
<path d="M653.3 52 L655.5 51.5 L662.5 58.5 L660.5 59 L658.0 61.5 L655.0 56Z" fill="#ffff00" stroke="#800080" stroke-width="1.1" stroke-linejoin="round"/>
<path d="M654.0 52.3 L655.5 52" stroke="#ff0000" stroke-width="1.2"/>
<path d="M656.0 55.5 L657.5 54.5 M657.0 57.5 L659.0 56" stroke="#00e000" stroke-width="1"/>
<path d="M657.5 59 L659.0 58 M659.5 57.5 L661.0 56.5" stroke="#ff00ff" stroke-width="1"/>
<path d="M676.0 48.5 L678.0 51.5" stroke="#800080" stroke-width="2.2" stroke-linecap="round"/>
<path d="M677.3 52 L679.5 51.5 L686.5 58.5 L684.5 59 L682.0 61.5 L679.0 56Z" fill="#ffff00" stroke="#800080" stroke-width="1.1" stroke-linejoin="round"/>
<path d="M678.0 52.3 L679.5 52" stroke="#ff0000" stroke-width="1.2"/>
<path d="M680.0 55.5 L681.5 54.5 M681.0 57.5 L683.0 56" stroke="#00e000" stroke-width="1"/>
<path d="M681.5 59 L683.0 58 M683.5 57.5 L685.0 56.5" stroke="#ff00ff" stroke-width="1"/>
<path d="M700.0 48.5 L702.0 51.5" stroke="#800080" stroke-width="2.2" stroke-linecap="round"/>
<path d="M701.3 52 L703.5 51.5 L710.5 58.5 L708.5 59 L706.0 61.5 L703.0 56Z" fill="#ffff00" stroke="#800080" stroke-width="1.1" stroke-linejoin="round"/>
<path d="M702.0 52.3 L703.5 52" stroke="#ff0000" stroke-width="1.2"/>
<path d="M704.0 55.5 L705.5 54.5 M705.0 57.5 L707.0 56" stroke="#00e000" stroke-width="1"/>
<path d="M705.5 59 L707.0 58 M707.5 57.5 L709.0 56.5" stroke="#ff00ff" stroke-width="1"/>
<rect x="684" y="48" width="5" height="5" fill="#000"/>
<path d="M684.2 52.8 L688 49" stroke="#0000ff" stroke-width="1.3"/><path d="M685.5 49.2 H688.5 V52" fill="#0000ff"/>
<path d="M708.5 48.5 L713.5 53.5 M713.5 48.5 L708.5 53.5" stroke="#800000" stroke-width="1.5"/>
<path d="M727.5 47 V62 M742.5 47 V62" stroke="#800000" stroke-width="1.1"/>
<path d="M731 50.5 H739" stroke="#b0b0b0" stroke-width="0.9"/>
<path d="M729 50.5 L732 48.5 V52.5Z M741 50.5 L738 48.5 V52.5Z" fill="#000"/>
<path d="M735 54.5 L733.5 58 L735.5 57.5 L734.5 61" stroke="#c0b000" stroke-width="1.3" fill="none"/>
<path d="M735.5 55 L734 58 L736 57.5" stroke="#ffff00" stroke-width="0.8" fill="none"/>
<path d="M751.5 47 V62 M766.5 47 V62" stroke="#800000" stroke-width="1.1"/>
<path d="M755 50.5 H763" stroke="#b0b0b0" stroke-width="0.9"/>
<path d="M753 50.5 L756 48.5 V52.5Z M765 50.5 L762 48.5 V52.5Z" fill="#000"/>
<path d="M777 55.7 L786 47.3 M777 60.5 H791" stroke="#800000" stroke-width="1.1"/>
<path d="M784.5 51 L788 58.5" stroke="#000" stroke-width="1.1"/>
<path d="M783 50 L787 50.5 L784.5 53.5Z M785.5 58 L790.5 57 L788 60.5Z" fill="#000"/>
<circle cx="807.5" cy="54.3" r="7" fill="none" stroke="#800000" stroke-width="1.1"/>
<path d="M807.8 54.6 L804.5 51.5" stroke="#000" stroke-width="1"/><path d="M803 50 L806.5 50.5 L803.5 53.5Z" fill="#000"/>
<circle cx="831.5" cy="54.3" r="7" fill="none" stroke="#800000" stroke-width="1.1"/>
<path d="M828.5 51.5 L834.8 57.6" stroke="#000" stroke-width="1"/><path d="M827.3 50.3 L831 50.8 L827.8 54Z M836 58.8 L832.3 58.3 L835.5 55Z" fill="#000"/>
<path d="M849.5 48 V58 M862.5 48 V58" stroke="#800000" stroke-width="1.1"/>
<path d="M851 51.2 H861" stroke="#000" stroke-width="1.1"/><path d="M850 51.2 L853 49.3 V53.1Z M862 51.2 L859 49.3 V53.1Z" fill="#000"/>
<path d="M851.5 61 L857.5 55" stroke="#909090" stroke-width="2.4" stroke-linecap="round"/>
<path d="M853 59 L857 55" stroke="#ffff00" stroke-width="1.1"/>
<path d="M857.5 54.5 L859.5 53" stroke="#909090" stroke-width="2"/>
<path d="M877.5 49.5 H887 L892.5 52.5 H883 Z" fill="#fff" stroke="#000" stroke-width="0.9"/>
<path d="M877.5 52.5 H887 L892.5 55.5 H883 Z" fill="#fff" stroke="#000" stroke-width="0.9"/>
<path d="M877.5 55.5 H887 L892.5 58.5 H883 Z" fill="#fff" stroke="#000" stroke-width="0.9"/>
<rect x="9" y="151.5" width="2" height="2" fill="#b0b0b0"/>
<rect x="10" y="152.5" width="1" height="1" fill="#6a6a6a"/>
<rect x="9" y="152.5" width="1" height="1" fill="#909090"/>
<rect x="14" y="151.5" width="2" height="2" fill="#b0b0b0"/>
<rect x="15" y="152.5" width="1" height="1" fill="#6a6a6a"/>
<rect x="14" y="152.5" width="1" height="1" fill="#909090"/>
<rect x="19" y="151.5" width="2" height="2" fill="#b0b0b0"/>
<rect x="20" y="152.5" width="1" height="1" fill="#6a6a6a"/>
<rect x="19" y="152.5" width="1" height="1" fill="#909090"/>
<rect x="24" y="151.5" width="2" height="2" fill="#b0b0b0"/>
<rect x="25" y="152.5" width="1" height="1" fill="#6a6a6a"/>
<rect x="24" y="152.5" width="1" height="1" fill="#909090"/>
<rect x="29" y="152.5" width="1" height="1" fill="#909090"/>
<rect x="43" y="151.5" width="2" height="2" fill="#b0b0b0"/>
<rect x="44" y="152.5" width="1" height="1" fill="#6a6a6a"/>
<rect x="43" y="152.5" width="1" height="1" fill="#909090"/>
<rect x="48" y="151.5" width="2" height="2" fill="#b0b0b0"/>
<rect x="49" y="152.5" width="1" height="1" fill="#6a6a6a"/>
<rect x="48" y="152.5" width="1" height="1" fill="#909090"/>
<rect x="53" y="151.5" width="2" height="2" fill="#b0b0b0"/>
<rect x="54" y="152.5" width="1" height="1" fill="#6a6a6a"/>
<rect x="53" y="152.5" width="1" height="1" fill="#909090"/>
<rect x="58" y="151.5" width="2" height="2" fill="#b0b0b0"/>
<rect x="59" y="152.5" width="1" height="1" fill="#6a6a6a"/>
<rect x="58" y="152.5" width="1" height="1" fill="#909090"/>
<rect x="63" y="152.5" width="1" height="1" fill="#909090"/>
<path d="M13 176.5 L23.8 166.3" stroke="#000" stroke-width="1"/>
<circle cx="13" cy="176.5" r="1.3" fill="#800000"/>
<circle cx="23.8" cy="166.3" r="1.3" fill="#800000"/>
<path d="M44.5 178.5 H47.5 M55 178.5 H59" stroke="#000" stroke-width="0.9"/>
<path d="M49.5 175.5 L52.5 172.5 L55 175 L52 178Z" fill="#a000a0" stroke="#000" stroke-width="0.8"/>
<path d="M52.5 172.5 L55 170 L57.5 172.5 L55 175Z" fill="#fff" stroke="#000" stroke-width="0.8"/>
<path d="M55 170 L59.3 166.5 V170 L57.5 172.5Z" fill="#e0e000" stroke="#000" stroke-width="0.8"/>
<path d="M12.4 197.4 H21.7 Q26.5 197 25.8 193.3 Q25 190 19.2 190" fill="none" stroke="#000" stroke-width="1"/>
<circle cx="12.4" cy="197.4" r="1.3" fill="#800000"/>
<circle cx="21.7" cy="197.4" r="1.3" fill="#800000"/>
<circle cx="19.2" cy="190" r="1.3" fill="#800000"/>
<path d="M44.5 194.3 H58.3 M51.4 187.3 V201.3" stroke="#000" stroke-width="1.5"/>
<path d="M44 194.3 L47 191.5 V197.1Z M58.8 194.3 L55.8 191.5 V197.1Z M51.4 186.8 L48.6 189.8 H54.2Z M51.4 201.8 L48.6 198.8 H54.2Z" fill="#000"/>
<rect x="11.5" y="211.5" width="13" height="8" fill="#fff" stroke="#000" stroke-width="1.1"/>
<circle cx="24.5" cy="211.5" r="1.3" fill="#800000"/>
<circle cx="11.5" cy="219.5" r="1.3" fill="#800000"/>
<circle cx="46.7" cy="212.4" r="3" fill="#fff" stroke="#000" stroke-width="0.9"/><circle cx="53.5" cy="218.5" r="3" fill="#fff" stroke="#000" stroke-width="0.9"/>
<path d="M52.5 210.5 L55.5 213.3 M55.8 210.8 V213.5 H53" stroke="#000" stroke-width="0.9" fill="none"/>
<path d="M12.6 243.5 Q14 236 24.3 232.3" fill="none" stroke="#000" stroke-width="1"/>
<circle cx="24.3" cy="232.3" r="1.3" fill="#800000"/>
<circle cx="16.6" cy="235.8" r="1.3" fill="#800000"/>
<path d="M10.8 245 L12.6 241.8 L14.6 245Z" fill="#800000"/>
<path d="M48.5 233 A5 5 0 1 0 53.5 233" fill="none" stroke="#000" stroke-width="2"/>
<path d="M47.5 230.5 L51 231 L48.2 235.5Z" fill="#000"/>
<circle cx="17.45" cy="259.05" r="6.2" fill="#fff" stroke="#000" stroke-width="1.1"/>
<path d="M17.4 259.2 L20.8 255.9" stroke="#800000" stroke-width="1.3"/>
<circle cx="17.4" cy="259.2" r="1.2" fill="#800000"/>
<rect x="45.5" y="253.5" width="11.5" height="12" fill="#fff" stroke="#800000" stroke-width="1.1"/>
<rect x="45.5" y="259.7" width="6.2" height="5.8" fill="#fff" stroke="#000" stroke-width="1.1"/>
<rect x="42" y="273" width="19" height="1" fill="#a0a0a0"/>
<rect x="42" y="274" width="19" height="1" fill="#fbfbfb"/>
<path d="M10.5 286.5 Q12 279 15.5 279.2 Q18 279.5 20.5 283.5 Q23 284.5 26 278.5" fill="none" stroke="#000" stroke-width="1.1"/>
<path d="M44.5 293.5 L50 283 V293.5Z M58.5 293.5 L52.8 283 V293.5Z" fill="#fff" stroke="#000" stroke-width="1"/>
<path d="M51.4 280.7 V294.4" stroke="#c00000" stroke-width="1.1"/>
<ellipse cx="18.5" cy="303" rx="6.8" ry="4.3" fill="#fff" stroke="#000" stroke-width="1"/>
<circle cx="18.5" cy="298.7" r="1.3" fill="#800000"/>
<circle cx="11.7" cy="303" r="1.3" fill="#800000"/>
<circle cx="25.3" cy="303" r="1.3" fill="#800000"/>
<path d="M44.5 313.5 Q43 309 46.5 307.5 Q47.5 303 51 303 Q54.5 303 55.5 307.5 Q59.5 309 58 313.5 Z" fill="#fff" stroke="#000" stroke-width="1"/>
<path d="M46.5 312 Q45.5 309.5 47.5 309 H49.8 V305.5 Q51 304.5 52.3 305.5 V309 H54.5 Q56.5 309.5 55.8 312Z" fill="none" stroke="#c00000" stroke-width="1"/>
<path d="M12.4 326 Q18.5 319 24.5 326" fill="none" stroke="#000" stroke-width="1"/>
<circle cx="12.4" cy="326" r="1.5" fill="#800000"/>
<circle cx="24.5" cy="326" r="1.5" fill="#800000"/>
<rect x="42" y="323" width="19" height="1" fill="#a0a0a0"/>
<rect x="42" y="324" width="19" height="1" fill="#fbfbfb"/>
<path d="M45.4 344.8 V339.5 Q45.4 332.6 51.5 332.6 H57.7" fill="none" stroke="#000" stroke-width="1.1"/>
<path d="M45.4 332.5 H49 M45.4 332.5 V337 M46.5 334 L48 333.2" stroke="#000" stroke-width="0.7" stroke-dasharray="0.8 0.8" fill="none"/>
<path d="M17.9 341.8 L24 347.2 L21.9 352.7 H14 L12 347.2Z" fill="#fff" stroke="#000" stroke-width="1"/>
<path d="M45.4 366.9 V361.1 L52.5 354.3 H57.7" fill="none" stroke="#000" stroke-width="1.1"/>
<path d="M45.4 354.5 H50 M45.4 354.5 V359 M46.5 356 L48 355.2" stroke="#000" stroke-width="0.7" stroke-dasharray="0.8 0.8" fill="none"/>
<circle cx="18.4" cy="369.3" r="1.3" fill="#800000"/>
<rect x="42" y="373" width="19" height="1" fill="#a0a0a0"/>
<rect x="42" y="374" width="19" height="1" fill="#fbfbfb"/>
<path fill-rule="evenodd" d="M17.4 384.3 H19.6 L24.3 396.4 H25.7 V397.9 H20.2 V396.4 H21.3 L20.3 393.6 H15.6 L14.7 396.4 H16 V397.9 H11.2 V396.4 H12.4 Z M16.1 392.1 H19.8 L18 387.2 Z" fill="#000"/>
<path d="M43.5 384.5 V391.2 H57.5 V384.5" fill="none" stroke="#000" stroke-width="1"/>
<circle cx="46.7" cy="384.5" r="1.3" fill="#800000"/>
<circle cx="54.6" cy="384.5" r="1.3" fill="#800000"/>
<rect x="9" y="405" width="19" height="1" fill="#a0a0a0"/>
<rect x="9" y="406" width="19" height="1" fill="#fbfbfb"/>
<path d="M43.8 406.8 H48.5" stroke="#000" stroke-width="1.6"/><path d="M50 406.8 H51.5 M53 406.8 H54.5" stroke="#800000" stroke-width="1.6"/>
<path d="M52.5 414.9 L58.8 402.6" stroke="#000" stroke-width="1"/>
<path d="M13.5 415.5 H20.5 L25 419.7 V425.5 H13.5Z" fill="#fff" stroke="#000" stroke-width="1.1"/>
<circle cx="18.5" cy="420.3" r="1.9" fill="none" stroke="#000" stroke-width="0.9"/>
<path d="M43 431.3 H58.5" stroke="#000" stroke-width="1"/><path d="M49.5 429.8 V432.8 M53.4 429.8 V432.8" stroke="#800000" stroke-width="1.2"/>
<circle cx="21.1" cy="439" r="3.5" fill="#fff" stroke="#000" stroke-width="1"/>
<path d="M11.5 440.5 H20.2 V447.7 H11.5Z" fill="#fff" stroke="#000" stroke-width="1"/>
<path d="M17.8 440.5 A3.5 3.5 0 0 0 20.2 443.6" fill="none" stroke="#000" stroke-width="0.9"/>
<path d="M43.7 453.2 H58.5" stroke="#800000" stroke-width="1" stroke-dasharray="2.2 1.3"/><path d="M48.2 461 L51.5 446.1" stroke="#000" stroke-width="1"/>
<rect x="11.5" y="458.5" width="12" height="9" fill="#fff" stroke="#000" stroke-width="1"/>
<path d="M17 460.8 L18.8 462.5 M18.8 460.8 L17 462.5" stroke="#c00000" stroke-width="0.7"/>
<path d="M19.8 462.5 V470.5 L21.5 468.8 L23 471.5 L24 471 L22.8 468.2 H25.3Z" fill="#fff" stroke="#000" stroke-width="0.8"/>
<rect x="9" y="477" width="19" height="1" fill="#a0a0a0"/>
<rect x="9" y="478" width="19" height="1" fill="#fbfbfb"/>
<rect x="42" y="467" width="19" height="1" fill="#a0a0a0"/>
<rect x="42" y="468" width="19" height="1" fill="#fbfbfb"/>
<path d="M12 488.3 L13 487.3 L14 488.3 L15 487.3 L16 488.3 L17 487.3" fill="none" stroke="#ff0000" stroke-width="0.9"/>
<path d="M17 487.8 L18.5 486.7 L19.5 487.7 L21 486.7 L22 487.5 L23.5 487.0 L25.8 487.8 V490.7 L24 490.3 L22 490.9 L20 490.3 L18 490.7 L17.5 489.5Z" fill="#ff0000"/>
<path d="M12 492.8 L13 491.8 L14 492.8 L15 491.8 L16 492.8 L17 491.8" fill="none" stroke="#0000ff" stroke-width="0.9"/>
<path d="M17 492.3 L18.5 491.2 L19.5 492.2 L21 491.2 L22 492 L23.5 491.5 L25.8 492.3 V495.2 L24 494.8 L22 495.4 L20 494.8 L18 495.2 L17.5 494Z" fill="#0000ff"/>
<path d="M12 497.3 L13 496.3 L14 497.3 L15 496.3 L16 497.3 L17 496.3" fill="none" stroke="#008000" stroke-width="0.9"/>
<path d="M17 496.8 L18.5 495.7 L19.5 496.7 L21 495.7 L22 496.5 L23.5 496.0 L25.8 496.8 V499.7 L24 499.3 L22 499.9 L20 499.3 L18 499.7 L17.5 498.5Z" fill="#008000"/>
<path d="M44.5 487 L51.5 480.5" stroke="#000" stroke-width="3.6" stroke-linecap="round"/>
<path d="M44.5 487 L51.5 480.5" stroke="#e00000" stroke-width="2.2" stroke-linecap="round"/>
<path d="M45.5 485.5 L50 481.5" stroke="#ff9090" stroke-width="0.7"/>
<path d="M53.5 478.5 L54.5 477.5 M55 475.5 L55.5 474 M57 477 L58.5 476.5 M56.5 479 L58 480" stroke="#c00000" stroke-width="0.8"/>
<path d="M44.5 499.5 H50 V504 H44.5Z M51.5 499.5 H57 V504 H51.5Z M44.5 505.5 H50 V510 H44.5Z M51.5 505.5 H57 V510 H51.5Z" fill="#fff" stroke="#000" stroke-width="1.1"/>
<rect x="12.0" y="508.0" width="3" height="3" fill="#ff0000"/>
<rect x="15.5" y="508.0" width="3" height="3" fill="#ffff00"/>
<rect x="19.0" y="508.0" width="3" height="3" fill="#ff00ff"/>
<rect x="12.0" y="511.5" width="3" height="3" fill="#00ff00"/>
<rect x="15.5" y="511.5" width="3" height="3" fill="#0000ff"/>
<rect x="19.0" y="511.5" width="3" height="3" fill="#00ff00"/>
<rect x="12.0" y="515.0" width="3" height="3" fill="#800000"/>
<rect x="15.5" y="515.0" width="3" height="3" fill="#00ffff"/>
<rect x="19.0" y="515.0" width="3" height="3" fill="#ff0000"/>
<rect x="1306" y="152" width="2" height="2" fill="#b0b0b0"/>
<rect x="1307" y="153" width="1" height="1" fill="#6a6a6a"/>
<rect x="1306" y="153" width="1" height="1" fill="#909090"/>
<rect x="1311" y="152" width="2" height="2" fill="#b0b0b0"/>
<rect x="1312" y="153" width="1" height="1" fill="#6a6a6a"/>
<rect x="1311" y="153" width="1" height="1" fill="#909090"/>
<rect x="1316" y="152" width="2" height="2" fill="#b0b0b0"/>
<rect x="1317" y="153" width="1" height="1" fill="#6a6a6a"/>
<rect x="1316" y="153" width="1" height="1" fill="#909090"/>
<rect x="1321" y="152" width="2" height="2" fill="#b0b0b0"/>
<rect x="1322" y="153" width="1" height="1" fill="#6a6a6a"/>
<rect x="1321" y="153" width="1" height="1" fill="#909090"/>
<rect x="1326" y="153" width="1" height="1" fill="#909090"/>
<rect x="1339" y="152" width="2" height="2" fill="#b0b0b0"/>
<rect x="1340" y="153" width="1" height="1" fill="#6a6a6a"/>
<rect x="1339" y="153" width="1" height="1" fill="#909090"/>
<rect x="1344" y="152" width="2" height="2" fill="#b0b0b0"/>
<rect x="1345" y="153" width="1" height="1" fill="#6a6a6a"/>
<rect x="1344" y="153" width="1" height="1" fill="#909090"/>
<rect x="1349" y="152" width="2" height="2" fill="#b0b0b0"/>
<rect x="1350" y="153" width="1" height="1" fill="#6a6a6a"/>
<rect x="1349" y="153" width="1" height="1" fill="#909090"/>
<rect x="1354" y="152" width="2" height="2" fill="#b0b0b0"/>
<rect x="1355" y="153" width="1" height="1" fill="#6a6a6a"/>
<rect x="1354" y="153" width="1" height="1" fill="#909090"/>
<rect x="1359" y="153" width="1" height="1" fill="#909090"/>
<rect x="1372" y="152" width="2" height="2" fill="#b0b0b0"/>
<rect x="1373" y="153" width="1" height="1" fill="#6a6a6a"/>
<rect x="1372" y="153" width="1" height="1" fill="#909090"/>
<rect x="1377" y="152" width="2" height="2" fill="#b0b0b0"/>
<rect x="1378" y="153" width="1" height="1" fill="#6a6a6a"/>
<rect x="1377" y="153" width="1" height="1" fill="#909090"/>
<rect x="1382" y="152" width="2" height="2" fill="#b0b0b0"/>
<rect x="1383" y="153" width="1" height="1" fill="#6a6a6a"/>
<rect x="1382" y="153" width="1" height="1" fill="#909090"/>
<rect x="1387" y="152" width="2" height="2" fill="#b0b0b0"/>
<rect x="1388" y="153" width="1" height="1" fill="#6a6a6a"/>
<rect x="1387" y="153" width="1" height="1" fill="#909090"/>
<rect x="1392" y="153" width="1" height="1" fill="#909090"/>
<rect x="1405" y="152" width="2" height="2" fill="#b0b0b0"/>
<rect x="1406" y="153" width="1" height="1" fill="#6a6a6a"/>
<rect x="1405" y="153" width="1" height="1" fill="#909090"/>
<rect x="1410" y="152" width="2" height="2" fill="#b0b0b0"/>
<rect x="1411" y="153" width="1" height="1" fill="#6a6a6a"/>
<rect x="1410" y="153" width="1" height="1" fill="#909090"/>
<rect x="1415" y="152" width="2" height="2" fill="#b0b0b0"/>
<rect x="1416" y="153" width="1" height="1" fill="#6a6a6a"/>
<rect x="1415" y="153" width="1" height="1" fill="#909090"/>
<rect x="1420" y="152" width="2" height="2" fill="#b0b0b0"/>
<rect x="1421" y="153" width="1" height="1" fill="#6a6a6a"/>
<rect x="1420" y="153" width="1" height="1" fill="#909090"/>
<rect x="1425" y="153" width="1" height="1" fill="#909090"/>
<path d="M1309.5 170.5 L1316 167 L1322.8 170.5 V172.5 L1316 176 L1309.5 172.8Z" fill="#fff" stroke="#000" stroke-width="1.1"/>
<path d="M1309.5 170.5 L1316 167 L1322.8 170.5 L1316 174Z" fill="#a8a8a8"/>
<path d="M1309.5 170.5 L1316 174 L1322.8 170.5 M1316 174 V176" fill="none" stroke="#000" stroke-width="1"/>
<path d="M1317.5 174.3 L1321.5 172.5" stroke="#ff0000" stroke-width="1"/>
<path d="M1315.5 171 V163.5" stroke="#ff0000" stroke-width="1.6"/><path d="M1312.3 165 L1315.5 160.3 L1318.7 165Z" fill="#ff0000"/>
<path d="M1316.8 167.5 L1317.8 168.5" stroke="#c0a000" stroke-width="0.8"/>
<rect x="1307" y="182" width="19" height="1" fill="#a0a0a0"/>
<rect x="1307" y="183" width="19" height="1" fill="#fbfbfb"/>
<path d="M1309.5 195.3 L1314 190.3 H1322.8 V198.6 L1317.6 203.5 H1309.5Z" fill="#f0f0f0" stroke="#000" stroke-width="1.2"/>
<path d="M1317.3 195.6 L1321.9 191.6 V198.3 L1317.3 202.6Z" fill="#a8a8a8"/>
<path d="M1310.6 202.5 V195.8 L1314.5 191.4 H1321.5 M1316.7 195.8 V202.5" fill="none" stroke="#fff" stroke-width="0.9"/>
<path d="M1309.2 215.5 V224 A5.8 2.5 0 0 0 1320.8 224 V215.5" fill="#f2f2f2" stroke="#000" stroke-width="1"/>
<ellipse cx="1315" cy="215.6" rx="5.8" ry="2.4" fill="#f2f2f2" stroke="#000" stroke-width="1"/>
<path d="M1310 223 A5 2 0 0 0 1320 223" fill="none" stroke="#c0c0c0" stroke-width="0.7"/>
<circle cx="1316" cy="243" r="5.8" fill="#f2f2f2" stroke="#000" stroke-width="1.1"/>
<path d="M1315.5 258.5 L1310.3 269 Q1315.5 273 1320.8 269Z" fill="#f2f2f2" stroke="#000" stroke-width="1"/>
<path d="M1317 263 L1319 269" stroke="#b0b0b0" stroke-width="1"/>
<ellipse cx="1316.3" cy="287.8" rx="6.9" ry="4.6" fill="#f2f2f2" stroke="#000" stroke-width="1.1"/>
<ellipse cx="1316.3" cy="287.3" rx="2.6" ry="1.5" fill="#f2f2f2" stroke="#000" stroke-width="0.9"/>
<path d="M1310 289.5 Q1316 293.5 1322.5 289.5" fill="none" stroke="#b0b0b0" stroke-width="0.8"/>
<defs><pattern id="dots" width="2" height="2" patternUnits="userSpaceOnUse"><rect width="2" height="2" fill="#e0e0e0"/><rect width="1" height="1" fill="#909090"/></pattern></defs>
<path d="M1309.5 318.5 V305.5 L1322.8 314.3 L1321.3 318.5Z" fill="url(#dots)" stroke="#000" stroke-width="1.1"/>
<rect x="1307" y="326" width="19" height="1" fill="#a0a0a0"/>
<rect x="1307" y="327" width="19" height="1" fill="#fbfbfb"/>
<path d="M1309.5 344.5 L1312 337 L1318 335.5 L1323.5 338 L1321 346 L1314 347.5Z" fill="#909090" stroke="#505050" stroke-width="0.8"/>
<path d="M1310.5 341 L1322.5 342 M1315 336 L1317 347" stroke="#404040" stroke-width="0.8"/>
<circle cx="1321" cy="341" r="0.7" fill="#ff0000"/><circle cx="1316" cy="347" r="0.7" fill="#0000c0"/><circle cx="1323" cy="343" r="0.7" fill="#0000c0"/>
<path d="M1311 369.5 L1312 359 L1323 362.5Z" fill="#909090" stroke="#303030" stroke-width="0.9"/>
<path d="M1312 359 L1316.5 366.5 M1314.5 360 L1311 369.5 M1323 362.5 L1314 364" stroke="#303030" stroke-width="0.8"/>
<path d="M1310 383 L1316.5 379.5 L1323 383 V390 L1316.5 393.5 L1310 390Z" fill="#fff" stroke="#000" stroke-width="1"/>
<path d="M1310 383 L1316.5 379.5 L1323 383 L1316.5 386.5Z" fill="#a8a8a8" stroke="#000" stroke-width="0.9"/>
<path d="M1316.5 386.5 V393.5" stroke="#000" stroke-width="0.9"/>
<path d="M1311 389 L1316 392 M1317 392 L1322 389" stroke="#b0b0b0" stroke-width="0.7"/>
<circle cx="1316.5" cy="380" r="0.7" fill="#0000ff"/><circle cx="1316.5" cy="393" r="0.7" fill="#0000ff"/>
<rect x="1307" y="401" width="19" height="1" fill="#a0a0a0"/>
<rect x="1307" y="402" width="19" height="1" fill="#fbfbfb"/>
<path d="M1308.5 413 L1311 410.5 H1317.5 V419 L1315 421.5 H1308.5Z" fill="#fff" stroke="#000" stroke-width="1.1"/>
<path d="M1308.5 413 H1315 L1317.5 410.5 M1315 413 V421.5" fill="none" stroke="#000" stroke-width="0.9"/>
<path d="M1309.5 419.5 H1314" stroke="#c0c0c0" stroke-width="1"/>
<path d="M1322 418.5 V413" stroke="#000" stroke-width="1.3"/><path d="M1320 414 L1322 411 L1324 414Z" fill="#000"/>
<path d="M1310 441 V437.5 Q1310.5 435 1314 435 H1321.5 Q1323.5 435 1323.5 437 Q1323.5 439 1321.5 439 H1315.5 Q1313 439 1312.5 441.5Z" fill="#fff" stroke="#000" stroke-width="0.9"/>
<path d="M1310 441.5 V438.5" stroke="#909090" stroke-width="2"/>
<path d="M1309 457.5 Q1312 455 1318.5 456.5 L1322.5 459 V468 H1316 L1309.5 463.5Z" fill="#fff" stroke="#000" stroke-width="1"/>
<path d="M1309 457.5 Q1313 461 1318.5 459 M1310 461.5 Q1314 463 1318 461" fill="none" stroke="#000" stroke-width="0.8"/>
<path d="M1318.5 460 H1322.5 V468.5 H1318.5Z" fill="#a0a0a0" stroke="#000" stroke-width="0.9"/>
<path d="M1318 454 L1323.5 454 L1321.5 457Z" fill="#000"/><path d="M1321 455 L1323.5 458.5" stroke="#000" stroke-width="0.8"/>
<path d="M1309 485.5 V490.5 L1312.5 488Z" fill="none" stroke="#008000" stroke-width="1.2"/>
<circle cx="1315.8" cy="483.7" r="1.9" fill="none" stroke="#000" stroke-width="1.1"/>
<circle cx="1321.6" cy="480.3" r="1.8" fill="none" stroke="#000080" stroke-width="1.1"/>
<path d="M1312.5 487.5 L1314 485.5 M1317.5 482.5 L1319.8 481" stroke="#c0c0c0" stroke-width="0.8"/>
<path d="M1309.5 505.5 L1315 500.5 H1323 V509.5 L1317 514.5 H1309.5Z" fill="#fff" stroke="#a0a0a0" stroke-width="1"/>
<path d="M1309.5 505.5 H1317 V514.5 M1317 505.5 L1323 500.5" fill="none" stroke="#a0a0a0" stroke-width="0.9"/>
<path d="M1313.5 506.5 L1318.5 501.0 Q1321 500.5 1322.5 503.0 Q1322.5 504.5 1321 505.5 L1317 509.5Z" fill="#909090" stroke="#000" stroke-width="1"/>
<path d="M1309.5 528.5 L1315 523.5 H1323 V532.5 L1317 537.5 H1309.5Z" fill="#fff" stroke="#a0a0a0" stroke-width="1"/>
<path d="M1309.5 528.5 H1317 V537.5 M1317 528.5 L1323 523.5" fill="none" stroke="#a0a0a0" stroke-width="0.9"/>
<path d="M1313 528.5 L1318 523.5 L1322.5 528.0 L1317.5 533.0Z" fill="#909090" stroke="#000" stroke-width="1"/>
<rect x="1307" y="545" width="19" height="1" fill="#a0a0a0"/>
<rect x="1307" y="546" width="19" height="1" fill="#fbfbfb"/>
<path d="M1315.8000000000002 555.1999999999999 A4.8 4.8 0 1 0 1315.8000000000002 563.6 A4.8 4.8 0 1 0 1315.8000000000002 555.1999999999999" fill="none" stroke="#000" stroke-width="1.2"/>
<path d="M1315.8000000000002 555.1999999999999 A4.8 4.8 0 0 0 1315.8000000000002 563.6 A4.8 4.8 0 0 0 1315.8000000000002 555.1999999999999" fill="none" stroke="#a0a0a0" stroke-width="1"/>
<circle cx="1319.2" cy="582.3" r="4.8" fill="none" stroke="#a0a0a0" stroke-width="1"/>
<path d="M1316.6 578.0999999999999 A4.8 4.8 0 1 0 1316.6 586.5 A4.8 4.8 0 0 1 1316.6 578.0999999999999" fill="none" stroke="#000" stroke-width="1.2"/>
<circle cx="1314.0" cy="605.1" r="4.8" fill="none" stroke="#a0a0a0" stroke-width="1"/><circle cx="1319.2" cy="605.1" r="4.8" fill="none" stroke="#a0a0a0" stroke-width="1"/>
<path d="M1316.6 600.9 A4.8 4.8 0 0 0 1316.6 609.3000000000001 A4.8 4.8 0 0 0 1316.6 600.9" fill="none" stroke="#000" stroke-width="1.2"/>
<path d="M1315.8000000000002 624.4 A4.8 4.8 0 1 0 1315.8000000000002 632.8000000000001 A4.8 4.8 0 1 0 1315.8000000000002 624.4" fill="none" stroke="#000" stroke-width="1.2"/>
<path d="M1315.8000000000002 624.4 A4.8 4.8 0 0 0 1315.8000000000002 632.8000000000001 A4.8 4.8 0 0 0 1315.8000000000002 624.4" fill="none" stroke="#a0a0a0" stroke-width="1"/>
<rect x="1342.5" y="170.5" width="13" height="5" fill="#fff" stroke="#000" stroke-width="1"/>
<rect x="1350" y="171" width="5" height="4" fill="#008080"/>
<path d="M1349.5 162 H1353.6 L1352.5 166 L1351.5 171.5 H1349.5Z" fill="#804000"/><path d="M1351.5 163 L1351 171" stroke="#e0d000" stroke-width="1"/>
<path d="M1350.5 168 V175" stroke="#0000a0" stroke-width="0.8"/>
<path d="M1341 184 L1349 190 L1357 184" fill="none" stroke="#000" stroke-width="1"/>
<path d="M1343 190 L1349 198.5 L1355 190" fill="#e8e8e8" stroke="#909090" stroke-width="1"/>
<path d="M1349 190 V198" stroke="#909090" stroke-width="0.9"/><circle cx="1349" cy="198.5" r="0.8" fill="#000"/>
<path d="M1341 188.5 H1345 Q1348 191 1350 188.5 H1357 V192.5 H1350 Q1348 195 1345 192.5 H1341Z" fill="none" stroke="#ff0000" stroke-width="1"/>
<path d="M1341.5 211 L1343.5 209 H1346.5 V217 L1344.5 219 H1341.5Z M1350.7 211 L1352.7 209 H1355.7 V217 L1353.7 219 H1350.7Z" fill="#fff" stroke="#000" stroke-width="1.1"/>
<path d="M1343.5 211 V219 M1352.7 211 V219" stroke="#000" stroke-width="0.9"/>
<path d="M1348.7 206.6 V220.7" stroke="#ff0000" stroke-width="1.1"/>
<rect x="1340" y="228" width="19" height="1" fill="#a0a0a0"/>
<rect x="1340" y="229" width="19" height="1" fill="#fbfbfb"/>
<path d="M1342.5 240 L1347 235.5 L1356 240 V247 L1349 251 L1342.5 247Z" fill="#909090" stroke="#000" stroke-width="1"/>
<path d="M1342.5 240 L1349 243.5 L1356 240 M1349 243.5 V251" stroke="#000" stroke-width="0.8" fill="none"/>
<path d="M1346 246 L1350.5 238 V249Z" fill="#fff" stroke="#ff0000" stroke-width="1"/>
<path d="M1342.5 263.5 L1347.5 258.5 H1356.5 V267.5 L1351.5 272.5 H1342.5Z" fill="#fff" stroke="#000" stroke-width="1"/>
<path d="M1342.5 263.5 H1351.5 L1356.5 258.5 M1351.5 263.5 V272.5" fill="none" stroke="#000" stroke-width="0.9"/>
<rect x="1344.5" y="265.5" width="5" height="5" fill="none" stroke="#000" stroke-width="1"/>
<path d="M1346.5 267 V269 H1348" stroke="#808080" stroke-width="0.7" fill="none"/>
<rect x="1342.5" y="282.5" width="14" height="14" fill="#fff" stroke="#000" stroke-width="1.1"/>
<path d="M1344.5 284.5 H1351.5 L1354.5 287.5 V294.5 H1344.5Z" fill="#fff" stroke="#800080" stroke-width="1.1"/>
<rect x="1340" y="303" width="19" height="1" fill="#a0a0a0"/>
<rect x="1340" y="304" width="19" height="1" fill="#fbfbfb"/>
<ellipse cx="1349" cy="318.3" rx="7.4" ry="4.3" fill="#000"/>
<path d="M1349 318.3 L1342.5 317 A6.5 3.5 0 0 1 1348.5 314.8Z" fill="#ffff00"/>
<path d="M1349 318.3 L1349.5 314.8 A6.5 3.5 0 0 1 1355.5 317Z" fill="#ff0000"/>
<path d="M1349 318.3 L1355.5 318.5 A6.5 3.5 0 0 1 1350 321.8Z" fill="#00c000"/>
<path d="M1349 318.3 L1348.5 321.8 A6.5 3.5 0 0 1 1342.5 318.8Z" fill="#00c0ff"/>
<path d="M1344 319.8 L1347 321" stroke="#0000ff" stroke-width="0.8"/>
<rect x="1341.5" y="336" width="4" height="11" fill="#ffff00" stroke="#000" stroke-width="1"/>
<path d="M1350.5 337.5 L1353 336 V346 L1350.5 347.5Z" fill="#ffff00" stroke="#000" stroke-width="0.9"/>
<path d="M1353 336 L1356.5 336.5 V346.5 L1353 346Z" fill="#ff0000" stroke="#000" stroke-width="0.9"/>
<path d="M1345.5 341.5 H1350" stroke="#808080" stroke-width="0.8"/><path d="M1348.5 340.5 V342.5" stroke="#000" stroke-width="0.8"/>
<circle cx="1353.5" cy="335.5" r="1.3" fill="#00e000"/>
<path d="M1341.5 364.5 V356.5 H1346.5 L1349 360.5 H1347 L1349.5 364.5 M1346.5 358.5 L1349.5 364.0" fill="none" stroke="#000" stroke-width="1"/>
<rect x="1341.5" y="364.5" width="15" height="7.5" fill="#fff" stroke="#000" stroke-width="1"/>
<path d="M1342.5 371.0 H1356" stroke="#c0c0c0" stroke-width="0.8"/>
<path d="M1341.5 387.5 V379.5 H1346.5 L1349 383.5 H1347 L1349.5 387.5 M1346.5 381.5 L1349.5 387.0" fill="none" stroke="#000" stroke-width="1"/>
<rect x="1341.5" y="387.5" width="15" height="7.5" fill="#fff" stroke="#000" stroke-width="1"/>
<rect x="1341.5" y="387.8" width="15" height="3" fill="#000"/>
<path d="M1342.5 394.0 H1356" stroke="#c0c0c0" stroke-width="0.8"/>
<path d="M1376.8 173.2 L1386.8 163.2" stroke="#000" stroke-width="1"/>
<circle cx="1376.8" cy="173.2" r="1.6" fill="#fff" stroke="#a00000" stroke-width="1"/>
<circle cx="1386.8" cy="163.2" r="1.6" fill="#fff" stroke="#a00000" stroke-width="1"/>
<path d="M1376.2 195.5 L1388.9 183.2" stroke="#000" stroke-width="1"/>
<circle cx="1381.8" cy="190" r="1.6" fill="#fff" stroke="#a00000" stroke-width="1"/>
<circle cx="1381.9" cy="212.2" r="6.6" fill="none" stroke="#000" stroke-width="1.1"/>
<circle cx="1381.8" cy="212.2" r="1.4" fill="#fff" stroke="#a00000" stroke-width="1"/>
<path d="M1375 240.7 L1388.9 227.2" stroke="#000" stroke-width="1"/>
<circle cx="1385" cy="231" r="1.6" fill="#fff" stroke="#a00000" stroke-width="1"/>
<path d="M1389 233.5 Q1387.5 233.5 1387.5 235 Q1387.5 236.3 1389 236.3" fill="none" stroke="#a0a0a0" stroke-width="0.8"/>
<path d="M1375 249.1 L1388.9 261.4 M1388.5 249 L1375 262" stroke="#000" stroke-width="1"/>
<rect x="1380.5" y="253.5" width="3" height="3" fill="#fff" stroke="#c00000" stroke-width="1"/>
<rect x="1376.5" y="272.5" width="9" height="6.5" fill="#ffff00" stroke="#000" stroke-width="1.1"/>
<circle cx="1385.2" cy="279.6" r="3.4" fill="#ffff00" stroke="#000" stroke-width="1"/>
<circle cx="1376.8" cy="280.2" r="1.4" fill="#fff" stroke="#a00000" stroke-width="1"/>
<path d="M1377 294.5 L1384.5 302 M1384.5 294.5 L1377 302" stroke="#800000" stroke-width="2"/>
<circle cx="1387" cy="305.1" r="1.3" fill="#fff" stroke="#000" stroke-width="0.9"/>
<rect x="1373" y="313" width="19" height="1" fill="#a0a0a0"/>
<rect x="1373" y="314" width="19" height="1" fill="#fbfbfb"/>
<text x="1382" y="330" text-anchor="middle" font-family="Liberation Sans" font-weight="bold" font-size="7" fill="#ff0000" transform="translate(1382 330) scale(0.97 0.85) translate(-1382 -330)">UCS</text>
<path d="M1374.5 350 L1382 342.5 L1390 350.5 L1382.5 357.5Z" fill="#fff" stroke="#000" stroke-width="1"/>
<path d="M1376.5 352 L1384 344.5 M1378.5 354 L1386 346.5 M1380.5 355.5 L1388 348.5" stroke="#b0b0b0" stroke-width="0.7"/>
<path d="M1377.5 349 L1382.5 345" stroke="#00e000" stroke-width="1.1"/><path d="M1377.5 349 L1384 353.5" stroke="#ff0000" stroke-width="1.1"/><path d="M1377.5 349 L1377 345.5" stroke="#0000ff" stroke-width="1.1"/>
<text x="1382" y="375.4" text-anchor="middle" font-family="Liberation Sans" font-weight="bold" font-size="7" fill="#0000ff" transform="translate(1382 375.4) scale(1.0 1.0) translate(-1382 -375.4)">WCS</text>
<rect x="1373" y="385" width="19" height="1" fill="#a0a0a0"/>
<rect x="1373" y="386" width="19" height="1" fill="#fbfbfb"/>
<defs><pattern id="dots2" x="0.5" y="0.5" width="2" height="2" patternUnits="userSpaceOnUse"><rect width="2" height="2" fill="#a8a8a8"/><rect width="1" height="1" fill="#f0f0f0"/></pattern></defs>
<rect x="1374.5" y="392.5" width="15" height="14.5" fill="url(#dots2)" stroke="#000" stroke-width="1.2"/>
<path d="M1380.5 393.5 V401.5 H1389" fill="none" stroke="#ff0000" stroke-width="1.3"/><path d="M1380.3 393.5 V399" stroke="#00e000" stroke-width="1.3"/>
<path d="M1408 163.5 H1422" stroke="#000" stroke-width="0.8" stroke-dasharray="1 1"/>
<path d="M1407.5 161.5 V165.5 L1409.5 163.5Z M1422.5 162 V165 M1421 163.5 H1424" stroke="#000" stroke-width="0.9" fill="#000"/>
<rect x="1407.5" y="167" width="15" height="3.5" fill="#ffff00" stroke="#000" stroke-width="1"/>
<path d="M1422.5 169.5 V173.5 H1418.5Z" fill="#000"/>
<rect x="1406" y="181" width="19" height="1" fill="#a0a0a0"/>
<rect x="1406" y="182" width="19" height="1" fill="#fbfbfb"/>
<path d="M1408 193 L1410.5 189 H1416 V196 H1414 L1412 202.5 H1408Z" fill="#ffff00" stroke="#c00000" stroke-width="1"/>
<rect x="1413.5" y="192.5" width="8" height="6" fill="#008080" stroke="#000080" stroke-width="0.9"/>
<ellipse cx="1412.8" cy="199" rx="3.6" ry="3" fill="#ff00ff"/>
<rect x="1420" y="197" width="2.5" height="2.5" fill="#800080"/>
<path d="M1407.5 212.3 H1423" stroke="#0000ff" stroke-width="1.1"/>
<path d="M1423 212.3 L1420 210.5" stroke="#0000ff" stroke-width="0.9"/>
<text x="1415.2" y="221.9" text-anchor="middle" font-family="Liberation Sans" font-size="9.8" fill="#780000" stroke="#780000" stroke-width="0.15" transform="translate(1415.2 221.9) scale(0.84 1) translate(-1415.2 -221.9)">DXF</text>
<path d="M1407.5 234.5 H1423" stroke="#0000ff" stroke-width="1.1"/>
<path d="M1423 234.5 L1420 232.7" stroke="#0000ff" stroke-width="0.9"/>
<text x="1415.2" y="244.2" text-anchor="middle" font-family="Liberation Sans" font-size="9.8" fill="#780000" stroke="#780000" stroke-width="0.15" transform="translate(1415.2 244.2) scale(0.84 1) translate(-1415.2 -244.2)">STL</text>
<path d="M1407.5 256.2 H1423" stroke="#0000ff" stroke-width="1.1"/>
<path d="M1423 256.2 L1420 254.39999999999998" stroke="#0000ff" stroke-width="0.9"/>
<text x="1415.2" y="266.1" text-anchor="middle" font-family="Liberation Sans" font-size="9.8" fill="#780000" stroke="#780000" stroke-width="0.15" transform="translate(1415.2 266.1) scale(0.84 1) translate(-1415.2 -266.1)">3DS</text>
<path d="M1407.5 278.5 H1423" stroke="#0000ff" stroke-width="1.1"/>
<path d="M1423 278.5 L1420 276.7" stroke="#0000ff" stroke-width="0.9"/>
<text x="1415.2" y="288.4" text-anchor="middle" font-family="Liberation Sans" font-size="9.8" fill="#780000" stroke="#780000" stroke-width="0.15" transform="translate(1415.2 288.4) scale(0.84 1) translate(-1415.2 -288.4)">STP</text>
<rect x="1406" y="297" width="19" height="1" fill="#a0a0a0"/>
<rect x="1406" y="298" width="19" height="1" fill="#fbfbfb"/>
<path d="M1407.5 306.3 H1423" stroke="#0000ff" stroke-width="1.1"/>
<path d="M1409 306.3 L1411.5 304.3" stroke="#0000ff" stroke-width="0.9"/>
<text x="1415.2" y="316" text-anchor="middle" font-family="Liberation Sans" font-size="9.8" fill="#780000" stroke="#780000" stroke-width="0.15" transform="translate(1415.2 316) scale(0.84 1) translate(-1415.2 -316)">DXF</text>
<path d="M1407.5 328.6 H1423" stroke="#0000ff" stroke-width="1.1"/>
<path d="M1409 328.6 L1411.5 326.6" stroke="#0000ff" stroke-width="0.9"/>
<text x="1415.2" y="338.3" text-anchor="middle" font-family="Liberation Sans" font-size="9.8" fill="#780000" stroke="#780000" stroke-width="0.15" transform="translate(1415.2 338.3) scale(0.84 1) translate(-1415.2 -338.3)">STP</text>
<path d="M1407.5 350.3 H1423" stroke="#0000ff" stroke-width="1.1"/>
<path d="M1409 350.3 L1411.5 348.3" stroke="#0000ff" stroke-width="0.9"/>
<text x="1415.2" y="360.3" text-anchor="middle" font-family="Liberation Sans" font-size="9.8" fill="#780000" stroke="#780000" stroke-width="0.15" transform="translate(1415.2 360.3) scale(0.84 1) translate(-1415.2 -360.3)">STL</text></svg></body></html>
